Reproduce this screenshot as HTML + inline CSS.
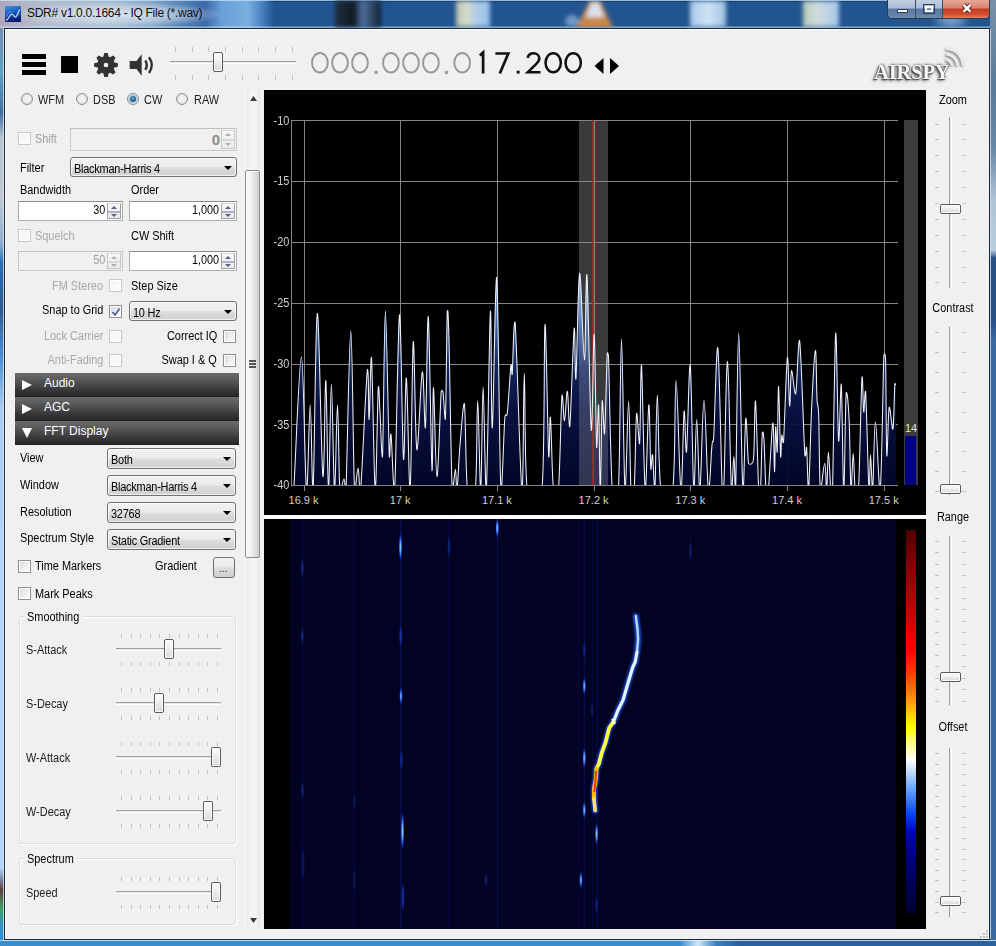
<!DOCTYPE html><html><head><meta charset="utf-8"><style>html,body{margin:0;padding:0;width:996px;height:946px;overflow:hidden;position:relative;font-family:"Liberation Sans", sans-serif;}
.t{position:absolute;white-space:nowrap;line-height:1;font-family:"Liberation Sans", sans-serif;}
div{box-sizing:border-box;}
</style></head><body><div style="position:absolute;left:0;top:0;width:996px;height:946px;background:#2f62a0;"></div><div style="position:absolute;left:0px;top:0px;width:996px;height:29px;background:linear-gradient(90deg,#b0a8bc 0px,#b4bccc 40px,#a8bcd0 110px,#8aa8c8 150px,#5a88b8 178px,#3a68a8 205px,#6aa0d8 222px,#78b0e0 248px,#4a80c0 262px,#22558f 274px,#22558f 996px);"></div><div style="position:absolute;left:10px;top:2px;width:215px;height:25px;background:radial-gradient(ellipse 50% 50% at 50% 50%,rgba(235,240,248,0.75) 0,rgba(220,230,240,0.5) 60%,rgba(220,230,240,0) 100%);"></div><div style="position:absolute;left:0px;top:0px;width:996px;height:1px;background:rgba(200,230,250,0.7);"></div><div style="position:absolute;left:270px;top:1px;width:620px;height:1px;background:rgba(20,40,70,0.5);"></div><div style="position:absolute;left:0px;top:26px;width:996px;height:2px;background:linear-gradient(180deg,rgba(255,255,255,0.15),rgba(200,225,245,0.7));"></div><div style="position:absolute;left:335px;top:1px;width:46px;height:26px;background:linear-gradient(90deg,#203040,#101820 40%,#5070a0 60%,#102030);filter:blur(2px);"></div><div style="position:absolute;left:456px;top:1px;width:34px;height:26px;background:linear-gradient(90deg,#b8c0b0,#d8dcc8 30%,#b0cce8 60%,#98c0e8);filter:blur(2px);"></div><svg style="position:absolute;left:550px;top:0px" width="80" height="28" viewBox="0 0 80 28"><defs><filter id="tb1" x="-30%" y="-30%" width="160%" height="160%"><feGaussianBlur stdDeviation="2.3"/></filter><clipPath id="tbc"><rect x="0" y="1" width="80" height="26"/></clipPath></defs><g clip-path="url(#tbc)"><g filter="url(#tb1)"><path d="M40,0 L50,0 L63,28 L26,28 Z" fill="#c88848"/><path d="M41,3 L49,3 L54,17 L36,17 Z" fill="#dde2ec"/><ellipse cx="22" cy="21" rx="7" ry="6" fill="#7098c8"/></g></g></svg><div style="position:absolute;left:690px;top:1px;width:36px;height:26px;background:linear-gradient(90deg,#a8c8e8,#d0e4f4 50%,#a0c0e0);filter:blur(2px);"></div><div style="position:absolute;left:803px;top:1px;width:36px;height:26px;background:linear-gradient(90deg,#b8c8b8,#d0dce0 40%,#a8c8e8);filter:blur(2px);"></div><div style="position:absolute;left:936px;top:1px;width:30px;height:26px;background:linear-gradient(90deg,#4a7ab0,#7aa0c8 50%,#4a7ab0);filter:blur(3px);"></div><div style="position:absolute;left:0px;top:28px;width:4px;height:918px;background:linear-gradient(180deg,#7890b0 0,#60a0c0 45px,#4070a0 85px,#b8c4d0 110px,#c0c8d0 170px,#90b0d0 215px,#2a70b0 235px,#305a90 280px,#5090d0 330px,#a8ccf0 380px,#b0d4f8 520px,#b0d4f8 840px,#8090a8 850px,#604040 862px,#40a060 880px,#3090d0 900px,#3090d0 918px);"></div><div style="position:absolute;left:3px;top:28px;width:1px;height:912px;background:rgba(230,240,250,0.7);"></div><div style="position:absolute;left:990px;top:0px;width:6px;height:946px;background:linear-gradient(180deg,#7890a8 0,#5a7a9a 90px,#6a88a8 150px,#b0c4d8 200px,#b8cce0 250px,#2a5088 258px,#2a5088 320px,#3a68a0 340px,#3a68a0 946px);"></div><div style="position:absolute;left:990px;top:29px;width:1px;height:910px;background:rgba(210,225,240,0.8);"></div><div style="position:absolute;left:0px;top:940px;width:996px;height:6px;background:linear-gradient(90deg,#3a8ccc 0,#3a8ccc 680px,#d0e8f8 698px,#3a80c0 716px,#2a60a0 740px,#2a60a0 996px);"></div><div style="position:absolute;left:0px;top:940px;width:996px;height:1px;background:rgba(220,240,255,0.8);"></div><svg style="position:absolute;left:5px;top:6px" width="16" height="16" viewBox="0 0 16 16"><defs><linearGradient id="ig" x1="0" y1="0" x2="0.3" y2="1"><stop offset="0" stop-color="#3a98e0"/><stop offset="0.5" stop-color="#1a5ab8"/><stop offset="1" stop-color="#0a1a70"/></linearGradient></defs><rect width="16" height="16" fill="url(#ig)"/><path d="M1,14 C2.5,15 4,10 6,8.5 C8,7 9,11 10.5,11 C12,11 13,5 15,3.5" stroke="#c8e0f8" stroke-width="1.1" fill="none"/><path d="M1.5,11 C3,5 6,4 7.5,8 C9,12 11,13 14.5,7" stroke="#90b8e8" stroke-width="0.8" fill="none" opacity="0.8"/></svg><div class="t" style="left:27px;top:7.2px;font-size:12px;color:#101010;letter-spacing:-0.28px;">SDR# v1.0.0.1664 - IQ File (*.wav)</div><div style="position:absolute;left:887px;top:0px;width:103px;height:19px;border:1px solid #2a3a50;border-top:none;border-radius:0 0 5px 5px;overflow:hidden;background:linear-gradient(180deg,#c0d0e0 0,#a8bcd4 45%,#5878a0 50%,#6a8ab0 100%);">
<div style="position:absolute;left:27px;top:0;width:1px;height:18px;background:#3a4a60"></div>
<div style="position:absolute;left:54px;top:0;width:1px;height:18px;background:#3a4a60"></div>
<div style="position:absolute;left:55px;top:0;width:47px;height:18px;background:linear-gradient(180deg,#e8a898 0,#d88070 45%,#c83820 50%,#d05030 80%,#e08060 100%);"></div>
<div style="position:absolute;left:9px;top:9px;width:11px;height:4px;background:#fff;border:1px solid #304050;"></div>
<div style="position:absolute;left:35px;top:4px;width:12px;height:10px;border:1px solid #303c4c;background:transparent;"><div style="position:absolute;left:1px;top:1px;width:8px;height:6px;border:2px solid #fff;"></div></div>
<svg style="position:absolute;left:73px;top:2px" width="12" height="12" viewBox="0 0 12 12"><path d="M2.6,2.8 L9.4,9.6 M9.4,2.8 L2.6,9.6" stroke="#4a2418" stroke-width="4.4" stroke-linecap="butt"/><path d="M2.6,2.8 L9.4,9.6 M9.4,2.8 L2.6,9.6" stroke="#fff" stroke-width="2.6" stroke-linecap="butt"/></svg>
</div><div style="position:absolute;left:4px;top:28px;width:986px;height:912px;background:#f0f0f0;border:1px solid #1c2838;"></div><div style="position:absolute;left:5px;top:29px;width:984px;height:1px;background:#ffffff;"></div><div style="position:absolute;left:5px;top:29px;width:1px;height:910px;background:#fcfcfc;"></div><div style="position:absolute;left:22px;top:54px;width:24px;height:5px;background:#000;"></div><div style="position:absolute;left:22px;top:62px;width:24px;height:5px;background:#000;"></div><div style="position:absolute;left:22px;top:70px;width:24px;height:5px;background:#000;"></div><div style="position:absolute;left:61px;top:56px;width:17px;height:17px;background:#000;"></div><svg style="position:absolute;left:94px;top:53px" width="24" height="24" viewBox="0 0 24 24"><path d="M20.41,9.41 L23.88,10.29 L23.88,13.71 L20.41,14.59 L19.78,16.11 L21.61,19.19 L19.19,21.61 L16.11,19.78 L14.59,20.41 L13.71,23.88 L10.29,23.88 L9.41,20.41 L7.89,19.78 L4.81,21.61 L2.39,19.19 L4.22,16.11 L3.59,14.59 L0.12,13.71 L0.12,10.29 L3.59,9.41 L4.22,7.89 L2.39,4.81 L4.81,2.39 L7.89,4.22 L9.41,3.59 L10.29,0.12 L13.71,0.12 L14.59,3.59 L16.11,4.22 L19.19,2.39 L21.61,4.81 L19.78,7.89 Z" fill="#333"/><circle cx="12" cy="12" r="2.3" fill="#f0f0f0"/></svg><svg style="position:absolute;left:129px;top:53px" width="26" height="24" viewBox="0 0 26 24"><path d="M0.7 8 L7.5 8 L12.7 1.2 L12.7 22.7 L7.5 16 L0.7 16 Z" fill="#333"/><path d="M16.3 7.5 Q19.3 12 16.3 16.8" stroke="#333" stroke-width="2.4" fill="none"/><path d="M20 4.3 Q25.5 12 20 20" stroke="#333" stroke-width="2.4" fill="none"/></svg><div style="position:absolute;left:170px;top:61px;width:126px;height:3px;border-top:1px solid #a0a0a0;border-bottom:1px solid #ffffff;background:#e6e6e6;"></div><div style="position:absolute;left:175px;top:47px;width:1px;height:5px;background:#c4c4c4;"></div><div style="position:absolute;left:175px;top:75px;width:1px;height:5px;background:#c4c4c4;"></div><div style="position:absolute;left:192px;top:47px;width:1px;height:5px;background:#c4c4c4;"></div><div style="position:absolute;left:192px;top:75px;width:1px;height:5px;background:#c4c4c4;"></div><div style="position:absolute;left:208px;top:47px;width:1px;height:5px;background:#c4c4c4;"></div><div style="position:absolute;left:208px;top:75px;width:1px;height:5px;background:#c4c4c4;"></div><div style="position:absolute;left:225px;top:47px;width:1px;height:5px;background:#c4c4c4;"></div><div style="position:absolute;left:225px;top:75px;width:1px;height:5px;background:#c4c4c4;"></div><div style="position:absolute;left:242px;top:47px;width:1px;height:5px;background:#c4c4c4;"></div><div style="position:absolute;left:242px;top:75px;width:1px;height:5px;background:#c4c4c4;"></div><div style="position:absolute;left:258px;top:47px;width:1px;height:5px;background:#c4c4c4;"></div><div style="position:absolute;left:258px;top:75px;width:1px;height:5px;background:#c4c4c4;"></div><div style="position:absolute;left:275px;top:47px;width:1px;height:5px;background:#c4c4c4;"></div><div style="position:absolute;left:275px;top:75px;width:1px;height:5px;background:#c4c4c4;"></div><div style="position:absolute;left:292px;top:47px;width:1px;height:5px;background:#c4c4c4;"></div><div style="position:absolute;left:292px;top:75px;width:1px;height:5px;background:#c4c4c4;"></div><div style="position:absolute;left:213px;top:52px;width:10px;height:20px;border:1px solid #5a5a5a;border-radius:2px;background:linear-gradient(180deg,#fdfdfd 0,#f0f0f0 40%,#d8d8d8 100%);box-shadow:inset 0 0 0 1px #fff;"></div><svg style="position:absolute;left:300px;top:45px" width="300" height="35" viewBox="300 45 300 35"><ellipse cx="319.9" cy="62.75" rx="7.9" ry="9.75" fill="none" stroke="#989898" stroke-width="1.9"/><ellipse cx="340" cy="62.75" rx="7.9" ry="9.75" fill="none" stroke="#989898" stroke-width="1.9"/><ellipse cx="360" cy="62.75" rx="7.9" ry="9.75" fill="none" stroke="#989898" stroke-width="1.9"/><ellipse cx="390.9" cy="62.75" rx="7.9" ry="9.75" fill="none" stroke="#989898" stroke-width="1.9"/><ellipse cx="411" cy="62.75" rx="7.9" ry="9.75" fill="none" stroke="#989898" stroke-width="1.9"/><ellipse cx="430.9" cy="62.75" rx="7.9" ry="9.75" fill="none" stroke="#989898" stroke-width="1.9"/><ellipse cx="462.2" cy="62.75" rx="7.9" ry="9.75" fill="none" stroke="#989898" stroke-width="1.9"/><rect x="374.5" y="70.8" width="3.2" height="3.2" fill="#a0a0a0"/><rect x="444.9" y="70.8" width="3.2" height="3.2" fill="#a0a0a0"/><ellipse cx="553.2" cy="62.75" rx="7.65" ry="9.45" fill="none" stroke="#111" stroke-width="2.5"/><ellipse cx="573.2" cy="62.75" rx="7.65" ry="9.45" fill="none" stroke="#111" stroke-width="2.5"/><rect x="516.7" y="70.7" width="2.9" height="2.9" fill="#111"/><path d="M479.8,55.6 L483.1,52.6 L483.1,73.5" fill="none" stroke="#111" stroke-width="2.7" stroke-linejoin="miter"/><path d="M495.4,53.5 L508.3,53.5 L499.8,73.5" fill="none" stroke="#111" stroke-width="2.7" stroke-linejoin="miter"/><path d="M527.6,57.8 C528.5,54.5 531,53.3 533.6,53.3 C537,53.3 539.3,55.6 539.3,58.6 C539.3,61.2 537.8,62.6 535.6,64.6 L527.8,72.2 L540.5,72.2" fill="none" stroke="#111" stroke-width="2.6" stroke-linejoin="miter"/></svg><svg style="position:absolute;left:594px;top:57px" width="26" height="18" viewBox="0 0 26 18"><path d="M0.5 9 L9.5 1 L9.5 17 Z" fill="#000"/><path d="M16 1 L25 9 L16 17 Z" fill="#000"/></svg><div class="t" style="left:874px;top:61.5px;font-size:21px;font-weight:bold;font-family:'Liberation Serif',serif;color:#f6f6f6;letter-spacing:-0.2px;transform:scale(0.98,0.98);transform-origin:0 0;text-shadow:-1px 1px 1px #404040,-2px 2px 3px #707070,0 0 3px #808080,1px -1px 2px #a0a0a0;">AIRSPY</div><svg style="position:absolute;left:938px;top:44px" width="32" height="30" viewBox="0 0 32 30"><g fill="none" stroke="#ececec" stroke-width="2.2" style="filter:drop-shadow(-1px 1px 1px #606060)"><path d="M8 16 A5.5 5.5 0 0 1 13.5 21.5"/><path d="M8 10.5 A11 11 0 0 1 19 21.5"/><path d="M8 5 A16.5 16.5 0 0 1 24.5 21.5"/></g></svg><div style="position:absolute;left:21px;top:93px;width:12px;height:12px;border-radius:50%;border:1px solid #8e8e8e;background:radial-gradient(circle at 50% 50%,#f6f6f6 0,#ececec 45%,#d6d6d6 85%,#c8c8c8 100%);padding:0;"><div style="position:absolute;left:0;top:0;width:10px;height:10px;border-radius:50%;"></div></div><div class="t" style="left:38px;top:93.6px;font-size:12px;color:#202020;transform:scaleX(0.91);transform-origin:0 50%;">WFM</div><div style="position:absolute;left:76px;top:93px;width:12px;height:12px;border-radius:50%;border:1px solid #8e8e8e;background:radial-gradient(circle at 50% 50%,#f6f6f6 0,#ececec 45%,#d6d6d6 85%,#c8c8c8 100%);padding:0;"><div style="position:absolute;left:0;top:0;width:10px;height:10px;border-radius:50%;"></div></div><div class="t" style="left:93px;top:93.6px;font-size:12px;color:#202020;transform:scaleX(0.91);transform-origin:0 50%;">DSB</div><div style="position:absolute;left:127px;top:93px;width:12px;height:12px;border-radius:50%;border:1px solid #8e8e8e;background:radial-gradient(circle at 50% 50%,#f6f6f6 0,#ececec 45%,#d6d6d6 85%,#c8c8c8 100%);padding:0;"><div style="position:absolute;left:0;top:0;width:10px;height:10px;border-radius:50%;"><div style="position:absolute;left:2px;top:2px;width:6px;height:6px;border-radius:50%;background:radial-gradient(circle at 45% 40%,#60b0e0 0,#1e6a98 50%,#0a3058 100%);box-shadow:0 0 1px 1px rgba(90,160,210,0.5);"></div></div></div><div class="t" style="left:144px;top:93.6px;font-size:12px;color:#202020;transform:scaleX(0.91);transform-origin:0 50%;">CW</div><div style="position:absolute;left:176px;top:93px;width:12px;height:12px;border-radius:50%;border:1px solid #8e8e8e;background:radial-gradient(circle at 50% 50%,#f6f6f6 0,#ececec 45%,#d6d6d6 85%,#c8c8c8 100%);padding:0;"><div style="position:absolute;left:0;top:0;width:10px;height:10px;border-radius:50%;"></div></div><div class="t" style="left:194px;top:93.6px;font-size:12px;color:#202020;transform:scaleX(0.91);transform-origin:0 50%;">RAW</div><div style="position:absolute;left:18px;top:132px;width:13px;height:13px;border:1px solid #c8c8c8;background:#fff;"><div style="position:absolute;left:1px;top:1px;width:9px;height:9px;background:linear-gradient(135deg,#f4f4f4,#fbfbfb);"></div></div><div class="t" style="left:35px;top:132.6px;font-size:12px;color:#a0a0a0;transform:scaleX(0.91);transform-origin:0 50%;">Shift</div><div style="position:absolute;left:70px;top:128px;width:167px;height:23px;border:1px solid #c8c8c8;border-top-color:#c0c0c0;background:#f0f0f0;"></div><div style="position:absolute;left:221px;top:130px;width:14px;height:19px;border:1px solid #c8c8c8;border-top-color:#d8d8d8;background:linear-gradient(180deg,#f8f8fa,#e8e8ee);"><div style="position:absolute;left:0;top:8px;width:12px;height:2px;background:#d8d8d8;"></div><svg style="position:absolute;left:3px;top:2px" width="6" height="3"><path d="M0 3 L3 0 L6 3Z" fill="#b0b0b0"/></svg><svg style="position:absolute;left:3px;top:12px" width="6" height="3"><path d="M0 0 L3 3 L6 0Z" fill="#b0b0b0"/></svg></div><div class="t" style="right:776px;top:131.8px;font-size:15px;color:#8c8c8c;font-weight:bold;">0</div><div class="t" style="left:20px;top:162.1px;font-size:12px;color:#000;transform:scaleX(0.91);transform-origin:0 50%;">Filter</div><div style="position:absolute;left:70px;top:157px;width:167px;height:20px;border:1px solid #707070;border-radius:3px;background:linear-gradient(180deg,#f2f2f2 0,#ebebeb 48%,#dddddd 52%,#cfcfcf 100%);box-shadow:inset 0 0 0 1px rgba(255,255,255,0.7);"></div><div class="t" style="left:74px;top:162.6px;font-size:12px;color:#000;transform:scaleX(0.91);transform-origin:0 50%;letter-spacing:-0.25px;">Blackman-Harris 4</div><svg style="position:absolute;left:224px;top:165.5px" width="8" height="4"><path d="M0 0 L8 0 L4 4Z" fill="#000"/></svg><div class="t" style="left:20px;top:184.1px;font-size:12px;color:#000;transform:scaleX(0.91);transform-origin:0 50%;">Bandwidth</div><div class="t" style="left:131px;top:184.1px;font-size:12px;color:#000;transform:scaleX(0.91);transform-origin:0 50%;">Order</div><div style="position:absolute;left:18px;top:201px;width:105px;height:20px;border:1px solid #abadb3;border-top-color:#8a8c94;background:#ffffff;"></div><div style="position:absolute;left:107px;top:203px;width:14px;height:16px;border:1px solid #a0a0a8;border-top-color:#d8d8d8;background:linear-gradient(180deg,#f8f8fa,#e8e8ee);"><div style="position:absolute;left:0;top:7px;width:12px;height:2px;background:#b0b4c0;"></div><svg style="position:absolute;left:3px;top:2px" width="6" height="3"><path d="M0 3 L3 0 L6 3Z" fill="#56608a"/></svg><svg style="position:absolute;left:3px;top:10px" width="6" height="3"><path d="M0 0 L3 3 L6 0Z" fill="#56608a"/></svg></div><div class="t" style="right:890.5px;top:204.2px;font-size:12px;color:#000;transform:scaleX(0.9);transform-origin:100% 50%;">30</div><div style="position:absolute;left:129px;top:201px;width:108px;height:20px;border:1px solid #abadb3;border-top-color:#8a8c94;background:#ffffff;"></div><div style="position:absolute;left:221px;top:203px;width:14px;height:16px;border:1px solid #a0a0a8;border-top-color:#d8d8d8;background:linear-gradient(180deg,#f8f8fa,#e8e8ee);"><div style="position:absolute;left:0;top:7px;width:12px;height:2px;background:#b0b4c0;"></div><svg style="position:absolute;left:3px;top:2px" width="6" height="3"><path d="M0 3 L3 0 L6 3Z" fill="#56608a"/></svg><svg style="position:absolute;left:3px;top:10px" width="6" height="3"><path d="M0 0 L3 3 L6 0Z" fill="#56608a"/></svg></div><div class="t" style="right:776.5px;top:204.2px;font-size:12px;color:#000;transform:scaleX(0.9);transform-origin:100% 50%;">1,000</div><div style="position:absolute;left:18px;top:229px;width:13px;height:13px;border:1px solid #c8c8c8;background:#fff;"><div style="position:absolute;left:1px;top:1px;width:9px;height:9px;background:linear-gradient(135deg,#f4f4f4,#fbfbfb);"></div></div><div class="t" style="left:35px;top:230.1px;font-size:12px;color:#a8a8a8;transform:scaleX(0.91);transform-origin:0 50%;">Squelch</div><div class="t" style="left:131px;top:230.1px;font-size:12px;color:#000;transform:scaleX(0.91);transform-origin:0 50%;">CW Shift</div><div style="position:absolute;left:18px;top:251px;width:105px;height:20px;border:1px solid #c8c8c8;border-top-color:#c0c0c0;background:#f0f0f0;"></div><div style="position:absolute;left:107px;top:253px;width:14px;height:16px;border:1px solid #c8c8c8;border-top-color:#d8d8d8;background:linear-gradient(180deg,#f8f8fa,#e8e8ee);"><div style="position:absolute;left:0;top:7px;width:12px;height:2px;background:#d8d8d8;"></div><svg style="position:absolute;left:3px;top:2px" width="6" height="3"><path d="M0 3 L3 0 L6 3Z" fill="#b0b0b0"/></svg><svg style="position:absolute;left:3px;top:10px" width="6" height="3"><path d="M0 0 L3 3 L6 0Z" fill="#b0b0b0"/></svg></div><div class="t" style="right:890.5px;top:254.2px;font-size:12px;color:#a0a0a0;transform:scaleX(0.9);transform-origin:100% 50%;">50</div><div style="position:absolute;left:129px;top:251px;width:108px;height:20px;border:1px solid #abadb3;border-top-color:#8a8c94;background:#ffffff;"></div><div style="position:absolute;left:221px;top:253px;width:14px;height:16px;border:1px solid #a0a0a8;border-top-color:#d8d8d8;background:linear-gradient(180deg,#f8f8fa,#e8e8ee);"><div style="position:absolute;left:0;top:7px;width:12px;height:2px;background:#b0b4c0;"></div><svg style="position:absolute;left:3px;top:2px" width="6" height="3"><path d="M0 3 L3 0 L6 3Z" fill="#56608a"/></svg><svg style="position:absolute;left:3px;top:10px" width="6" height="3"><path d="M0 0 L3 3 L6 0Z" fill="#56608a"/></svg></div><div class="t" style="right:776.5px;top:254.2px;font-size:12px;color:#000;transform:scaleX(0.9);transform-origin:100% 50%;">1,000</div><div class="t" style="right:893px;top:280.1px;font-size:12px;color:#a8a8a8;transform:scaleX(0.91);transform-origin:100% 50%;">FM Stereo</div><div style="position:absolute;left:109px;top:279px;width:13px;height:13px;border:1px solid #c8c8c8;background:#fff;"><div style="position:absolute;left:1px;top:1px;width:9px;height:9px;background:linear-gradient(135deg,#f4f4f4,#fbfbfb);"></div></div><div class="t" style="left:131px;top:280.1px;font-size:12px;color:#000;transform:scaleX(0.91);transform-origin:0 50%;">Step Size</div><div class="t" style="right:893px;top:304.1px;font-size:12px;color:#000;transform:scaleX(0.91);transform-origin:100% 50%;">Snap to Grid</div><div style="position:absolute;left:109px;top:305px;width:13px;height:13px;border:1px solid #8e8f8f;background:#fff;"><div style="position:absolute;left:1px;top:1px;width:9px;height:9px;background:linear-gradient(135deg,#dcdcdc 0,#f0f0f0 60%,#fbfbfb 100%);"></div><svg style="position:absolute;left:1px;top:1px" width="10" height="10" viewBox="0 0 10 10"><path d="M1.5 5 L4 8 L8.5 1.5" stroke="#4a5a9a" stroke-width="1.6" fill="none"/></svg></div><div style="position:absolute;left:129px;top:301px;width:108px;height:20px;border:1px solid #707070;border-radius:3px;background:linear-gradient(180deg,#f2f2f2 0,#ebebeb 48%,#dddddd 52%,#cfcfcf 100%);box-shadow:inset 0 0 0 1px rgba(255,255,255,0.7);"></div><div class="t" style="left:133px;top:306.6px;font-size:12px;color:#000;transform:scaleX(0.91);transform-origin:0 50%;letter-spacing:-0.25px;">10 Hz</div><svg style="position:absolute;left:224px;top:309.5px" width="8" height="4"><path d="M0 0 L8 0 L4 4Z" fill="#000"/></svg><div class="t" style="right:893px;top:330.1px;font-size:12px;color:#a8a8a8;transform:scaleX(0.91);transform-origin:100% 50%;">Lock Carrier</div><div style="position:absolute;left:109px;top:330px;width:13px;height:13px;border:1px solid #c8c8c8;background:#fff;"><div style="position:absolute;left:1px;top:1px;width:9px;height:9px;background:linear-gradient(135deg,#f4f4f4,#fbfbfb);"></div></div><div class="t" style="right:779px;top:330.1px;font-size:12px;color:#000;transform:scaleX(0.91);transform-origin:100% 50%;">Correct IQ</div><div style="position:absolute;left:223px;top:330px;width:13px;height:13px;border:1px solid #8e8f8f;background:#fff;"><div style="position:absolute;left:1px;top:1px;width:9px;height:9px;background:linear-gradient(135deg,#dcdcdc 0,#f0f0f0 60%,#fbfbfb 100%);"></div></div><div class="t" style="right:893px;top:354.1px;font-size:12px;color:#a8a8a8;transform:scaleX(0.91);transform-origin:100% 50%;">Anti-Fading</div><div style="position:absolute;left:109px;top:354px;width:13px;height:13px;border:1px solid #c8c8c8;background:#fff;"><div style="position:absolute;left:1px;top:1px;width:9px;height:9px;background:linear-gradient(135deg,#f4f4f4,#fbfbfb);"></div></div><div class="t" style="right:779px;top:354.1px;font-size:12px;color:#000;transform:scaleX(0.91);transform-origin:100% 50%;">Swap I &amp; Q</div><div style="position:absolute;left:223px;top:354px;width:13px;height:13px;border:1px solid #8e8f8f;background:#fff;"><div style="position:absolute;left:1px;top:1px;width:9px;height:9px;background:linear-gradient(135deg,#dcdcdc 0,#f0f0f0 60%,#fbfbfb 100%);"></div></div><div style="position:absolute;left:15px;top:373px;width:224px;height:24px;background:linear-gradient(180deg,#6c6c6e 0,#58585a 30%,#3c3c3e 65%,#2a2a2c 92%,#1e1e20 100%);"></div><svg style="position:absolute;left:22px;top:380px" width="10" height="10"><path d="M0 0 L10 5 L0 10Z" fill="#fff"/></svg><div class="t" style="left:44px;top:376.8px;font-size:12px;color:#fff;">Audio</div><div style="position:absolute;left:15px;top:397px;width:224px;height:24px;background:linear-gradient(180deg,#6c6c6e 0,#58585a 30%,#3c3c3e 65%,#2a2a2c 92%,#1e1e20 100%);"></div><svg style="position:absolute;left:22px;top:404px" width="10" height="10"><path d="M0 0 L10 5 L0 10Z" fill="#fff"/></svg><div class="t" style="left:44px;top:400.8px;font-size:12px;color:#fff;">AGC</div><div style="position:absolute;left:15px;top:421px;width:224px;height:24px;background:linear-gradient(180deg,#6c6c6e 0,#58585a 30%,#3c3c3e 65%,#2a2a2c 92%,#1e1e20 100%);"></div><svg style="position:absolute;left:22px;top:428px" width="10" height="10"><path d="M0 0 L10 0 L5 10Z" fill="#fff"/></svg><div class="t" style="left:44px;top:424.8px;font-size:12px;color:#fff;">FFT Display</div><div class="t" style="left:20px;top:451.6px;font-size:12px;color:#000;transform:scaleX(0.91);transform-origin:0 50%;">View</div><div style="position:absolute;left:107px;top:448px;width:129px;height:21px;border:1px solid #707070;border-radius:3px;background:linear-gradient(180deg,#f2f2f2 0,#ebebeb 48%,#dddddd 52%,#cfcfcf 100%);box-shadow:inset 0 0 0 1px rgba(255,255,255,0.7);"></div><div class="t" style="left:111px;top:454.1px;font-size:12px;color:#000;transform:scaleX(0.91);transform-origin:0 50%;letter-spacing:-0.25px;">Both</div><svg style="position:absolute;left:223px;top:457.0px" width="8" height="4"><path d="M0 0 L8 0 L4 4Z" fill="#000"/></svg><div class="t" style="left:20px;top:478.6px;font-size:12px;color:#000;transform:scaleX(0.91);transform-origin:0 50%;">Window</div><div style="position:absolute;left:107px;top:475px;width:129px;height:21px;border:1px solid #707070;border-radius:3px;background:linear-gradient(180deg,#f2f2f2 0,#ebebeb 48%,#dddddd 52%,#cfcfcf 100%);box-shadow:inset 0 0 0 1px rgba(255,255,255,0.7);"></div><div class="t" style="left:111px;top:481.1px;font-size:12px;color:#000;transform:scaleX(0.91);transform-origin:0 50%;letter-spacing:-0.25px;">Blackman-Harris 4</div><svg style="position:absolute;left:223px;top:484.0px" width="8" height="4"><path d="M0 0 L8 0 L4 4Z" fill="#000"/></svg><div class="t" style="left:20px;top:505.6px;font-size:12px;color:#000;transform:scaleX(0.91);transform-origin:0 50%;">Resolution</div><div style="position:absolute;left:107px;top:502px;width:129px;height:21px;border:1px solid #707070;border-radius:3px;background:linear-gradient(180deg,#f2f2f2 0,#ebebeb 48%,#dddddd 52%,#cfcfcf 100%);box-shadow:inset 0 0 0 1px rgba(255,255,255,0.7);"></div><div class="t" style="left:111px;top:508.1px;font-size:12px;color:#000;transform:scaleX(0.91);transform-origin:0 50%;letter-spacing:-0.25px;">32768</div><svg style="position:absolute;left:223px;top:511.0px" width="8" height="4"><path d="M0 0 L8 0 L4 4Z" fill="#000"/></svg><div class="t" style="left:20px;top:532.1px;font-size:12px;color:#000;transform:scaleX(0.91);transform-origin:0 50%;">Spectrum Style</div><div style="position:absolute;left:107px;top:529px;width:129px;height:21px;border:1px solid #707070;border-radius:3px;background:linear-gradient(180deg,#f2f2f2 0,#ebebeb 48%,#dddddd 52%,#cfcfcf 100%);box-shadow:inset 0 0 0 1px rgba(255,255,255,0.7);"></div><div class="t" style="left:111px;top:535.1px;font-size:12px;color:#000;transform:scaleX(0.91);transform-origin:0 50%;letter-spacing:-0.25px;">Static Gradient</div><svg style="position:absolute;left:223px;top:538.0px" width="8" height="4"><path d="M0 0 L8 0 L4 4Z" fill="#000"/></svg><div style="position:absolute;left:18px;top:560px;width:13px;height:13px;border:1px solid #8e8f8f;background:#fff;"><div style="position:absolute;left:1px;top:1px;width:9px;height:9px;background:linear-gradient(135deg,#dcdcdc 0,#f0f0f0 60%,#fbfbfb 100%);"></div></div><div class="t" style="left:35px;top:560.1px;font-size:12px;color:#000;transform:scaleX(0.91);transform-origin:0 50%;">Time Markers</div><div class="t" style="left:155px;top:560.1px;font-size:12px;color:#000;transform:scaleX(0.91);transform-origin:0 50%;">Gradient</div><div style="position:absolute;left:213px;top:557px;width:22px;height:21px;border:1px solid #707070;border-radius:3px;background:linear-gradient(180deg,#f2f2f2 0,#ebebeb 48%,#dddddd 52%,#cfcfcf 100%);"></div><div class="t" style="left:219px;top:563.5px;font-size:10px;color:#202020;">...</div><div style="position:absolute;left:18px;top:587px;width:13px;height:13px;border:1px solid #8e8f8f;background:#fff;"><div style="position:absolute;left:1px;top:1px;width:9px;height:9px;background:linear-gradient(135deg,#dcdcdc 0,#f0f0f0 60%,#fbfbfb 100%);"></div></div><div class="t" style="left:35px;top:587.6px;font-size:12px;color:#000;transform:scaleX(0.91);transform-origin:0 50%;">Mark Peaks</div><div style="position:absolute;left:19px;top:616px;width:217px;height:228px;border:1px solid #d5dfe5;border-radius:3px;box-shadow:inset 1px 1px 0 #fff,1px 1px 0 #fff;"></div><div style="position:absolute;left:25px;top:614px;width:58px;height:4px;background:#f0f0f0;"></div><div class="t" style="left:27px;top:610.6px;font-size:12px;color:#000;transform:scaleX(0.91);transform-origin:0 50%;">Smoothing</div><div class="t" style="left:26px;top:643.6px;font-size:12px;color:#202020;transform:scaleX(0.91);transform-origin:0 50%;">S-Attack</div><div style="position:absolute;left:116px;top:648px;width:105px;height:3px;border-top:1px solid #a0a0a0;border-bottom:1px solid #ffffff;background:#e6e6e6;"></div><div style="position:absolute;left:121px;top:634px;width:1px;height:4px;background:#c4c4c4;"></div><div style="position:absolute;left:121px;top:662px;width:1px;height:4px;background:#c4c4c4;"></div><div style="position:absolute;left:131px;top:634px;width:1px;height:4px;background:#c4c4c4;"></div><div style="position:absolute;left:131px;top:662px;width:1px;height:4px;background:#c4c4c4;"></div><div style="position:absolute;left:140px;top:634px;width:1px;height:4px;background:#c4c4c4;"></div><div style="position:absolute;left:140px;top:662px;width:1px;height:4px;background:#c4c4c4;"></div><div style="position:absolute;left:150px;top:634px;width:1px;height:4px;background:#c4c4c4;"></div><div style="position:absolute;left:150px;top:662px;width:1px;height:4px;background:#c4c4c4;"></div><div style="position:absolute;left:159px;top:634px;width:1px;height:4px;background:#c4c4c4;"></div><div style="position:absolute;left:159px;top:662px;width:1px;height:4px;background:#c4c4c4;"></div><div style="position:absolute;left:169px;top:634px;width:1px;height:4px;background:#c4c4c4;"></div><div style="position:absolute;left:169px;top:662px;width:1px;height:4px;background:#c4c4c4;"></div><div style="position:absolute;left:179px;top:634px;width:1px;height:4px;background:#c4c4c4;"></div><div style="position:absolute;left:179px;top:662px;width:1px;height:4px;background:#c4c4c4;"></div><div style="position:absolute;left:188px;top:634px;width:1px;height:4px;background:#c4c4c4;"></div><div style="position:absolute;left:188px;top:662px;width:1px;height:4px;background:#c4c4c4;"></div><div style="position:absolute;left:198px;top:634px;width:1px;height:4px;background:#c4c4c4;"></div><div style="position:absolute;left:198px;top:662px;width:1px;height:4px;background:#c4c4c4;"></div><div style="position:absolute;left:207px;top:634px;width:1px;height:4px;background:#c4c4c4;"></div><div style="position:absolute;left:207px;top:662px;width:1px;height:4px;background:#c4c4c4;"></div><div style="position:absolute;left:217px;top:634px;width:1px;height:4px;background:#c4c4c4;"></div><div style="position:absolute;left:217px;top:662px;width:1px;height:4px;background:#c4c4c4;"></div><div style="position:absolute;left:164px;top:639px;width:10px;height:20px;border:1px solid #5a5a5a;border-radius:2px;background:linear-gradient(180deg,#fdfdfd 0,#f0f0f0 40%,#d8d8d8 100%);box-shadow:inset 0 0 0 1px #fff;"></div><div class="t" style="left:26px;top:697.6px;font-size:12px;color:#202020;transform:scaleX(0.91);transform-origin:0 50%;">S-Decay</div><div style="position:absolute;left:116px;top:702px;width:105px;height:3px;border-top:1px solid #a0a0a0;border-bottom:1px solid #ffffff;background:#e6e6e6;"></div><div style="position:absolute;left:121px;top:688px;width:1px;height:4px;background:#c4c4c4;"></div><div style="position:absolute;left:121px;top:716px;width:1px;height:4px;background:#c4c4c4;"></div><div style="position:absolute;left:131px;top:688px;width:1px;height:4px;background:#c4c4c4;"></div><div style="position:absolute;left:131px;top:716px;width:1px;height:4px;background:#c4c4c4;"></div><div style="position:absolute;left:140px;top:688px;width:1px;height:4px;background:#c4c4c4;"></div><div style="position:absolute;left:140px;top:716px;width:1px;height:4px;background:#c4c4c4;"></div><div style="position:absolute;left:150px;top:688px;width:1px;height:4px;background:#c4c4c4;"></div><div style="position:absolute;left:150px;top:716px;width:1px;height:4px;background:#c4c4c4;"></div><div style="position:absolute;left:159px;top:688px;width:1px;height:4px;background:#c4c4c4;"></div><div style="position:absolute;left:159px;top:716px;width:1px;height:4px;background:#c4c4c4;"></div><div style="position:absolute;left:169px;top:688px;width:1px;height:4px;background:#c4c4c4;"></div><div style="position:absolute;left:169px;top:716px;width:1px;height:4px;background:#c4c4c4;"></div><div style="position:absolute;left:179px;top:688px;width:1px;height:4px;background:#c4c4c4;"></div><div style="position:absolute;left:179px;top:716px;width:1px;height:4px;background:#c4c4c4;"></div><div style="position:absolute;left:188px;top:688px;width:1px;height:4px;background:#c4c4c4;"></div><div style="position:absolute;left:188px;top:716px;width:1px;height:4px;background:#c4c4c4;"></div><div style="position:absolute;left:198px;top:688px;width:1px;height:4px;background:#c4c4c4;"></div><div style="position:absolute;left:198px;top:716px;width:1px;height:4px;background:#c4c4c4;"></div><div style="position:absolute;left:207px;top:688px;width:1px;height:4px;background:#c4c4c4;"></div><div style="position:absolute;left:207px;top:716px;width:1px;height:4px;background:#c4c4c4;"></div><div style="position:absolute;left:217px;top:688px;width:1px;height:4px;background:#c4c4c4;"></div><div style="position:absolute;left:217px;top:716px;width:1px;height:4px;background:#c4c4c4;"></div><div style="position:absolute;left:154px;top:693px;width:10px;height:20px;border:1px solid #5a5a5a;border-radius:2px;background:linear-gradient(180deg,#fdfdfd 0,#f0f0f0 40%,#d8d8d8 100%);box-shadow:inset 0 0 0 1px #fff;"></div><div class="t" style="left:26px;top:751.6px;font-size:12px;color:#202020;transform:scaleX(0.91);transform-origin:0 50%;">W-Attack</div><div style="position:absolute;left:116px;top:756px;width:105px;height:3px;border-top:1px solid #a0a0a0;border-bottom:1px solid #ffffff;background:#e6e6e6;"></div><div style="position:absolute;left:121px;top:742px;width:1px;height:4px;background:#c4c4c4;"></div><div style="position:absolute;left:121px;top:770px;width:1px;height:4px;background:#c4c4c4;"></div><div style="position:absolute;left:131px;top:742px;width:1px;height:4px;background:#c4c4c4;"></div><div style="position:absolute;left:131px;top:770px;width:1px;height:4px;background:#c4c4c4;"></div><div style="position:absolute;left:140px;top:742px;width:1px;height:4px;background:#c4c4c4;"></div><div style="position:absolute;left:140px;top:770px;width:1px;height:4px;background:#c4c4c4;"></div><div style="position:absolute;left:150px;top:742px;width:1px;height:4px;background:#c4c4c4;"></div><div style="position:absolute;left:150px;top:770px;width:1px;height:4px;background:#c4c4c4;"></div><div style="position:absolute;left:159px;top:742px;width:1px;height:4px;background:#c4c4c4;"></div><div style="position:absolute;left:159px;top:770px;width:1px;height:4px;background:#c4c4c4;"></div><div style="position:absolute;left:169px;top:742px;width:1px;height:4px;background:#c4c4c4;"></div><div style="position:absolute;left:169px;top:770px;width:1px;height:4px;background:#c4c4c4;"></div><div style="position:absolute;left:179px;top:742px;width:1px;height:4px;background:#c4c4c4;"></div><div style="position:absolute;left:179px;top:770px;width:1px;height:4px;background:#c4c4c4;"></div><div style="position:absolute;left:188px;top:742px;width:1px;height:4px;background:#c4c4c4;"></div><div style="position:absolute;left:188px;top:770px;width:1px;height:4px;background:#c4c4c4;"></div><div style="position:absolute;left:198px;top:742px;width:1px;height:4px;background:#c4c4c4;"></div><div style="position:absolute;left:198px;top:770px;width:1px;height:4px;background:#c4c4c4;"></div><div style="position:absolute;left:207px;top:742px;width:1px;height:4px;background:#c4c4c4;"></div><div style="position:absolute;left:207px;top:770px;width:1px;height:4px;background:#c4c4c4;"></div><div style="position:absolute;left:217px;top:742px;width:1px;height:4px;background:#c4c4c4;"></div><div style="position:absolute;left:217px;top:770px;width:1px;height:4px;background:#c4c4c4;"></div><div style="position:absolute;left:211px;top:747px;width:10px;height:20px;border:1px solid #5a5a5a;border-radius:2px;background:linear-gradient(180deg,#fdfdfd 0,#f0f0f0 40%,#d8d8d8 100%);box-shadow:inset 0 0 0 1px #fff;"></div><div class="t" style="left:26px;top:805.6px;font-size:12px;color:#202020;transform:scaleX(0.91);transform-origin:0 50%;">W-Decay</div><div style="position:absolute;left:116px;top:810px;width:105px;height:3px;border-top:1px solid #a0a0a0;border-bottom:1px solid #ffffff;background:#e6e6e6;"></div><div style="position:absolute;left:121px;top:796px;width:1px;height:4px;background:#c4c4c4;"></div><div style="position:absolute;left:121px;top:824px;width:1px;height:4px;background:#c4c4c4;"></div><div style="position:absolute;left:131px;top:796px;width:1px;height:4px;background:#c4c4c4;"></div><div style="position:absolute;left:131px;top:824px;width:1px;height:4px;background:#c4c4c4;"></div><div style="position:absolute;left:140px;top:796px;width:1px;height:4px;background:#c4c4c4;"></div><div style="position:absolute;left:140px;top:824px;width:1px;height:4px;background:#c4c4c4;"></div><div style="position:absolute;left:150px;top:796px;width:1px;height:4px;background:#c4c4c4;"></div><div style="position:absolute;left:150px;top:824px;width:1px;height:4px;background:#c4c4c4;"></div><div style="position:absolute;left:159px;top:796px;width:1px;height:4px;background:#c4c4c4;"></div><div style="position:absolute;left:159px;top:824px;width:1px;height:4px;background:#c4c4c4;"></div><div style="position:absolute;left:169px;top:796px;width:1px;height:4px;background:#c4c4c4;"></div><div style="position:absolute;left:169px;top:824px;width:1px;height:4px;background:#c4c4c4;"></div><div style="position:absolute;left:179px;top:796px;width:1px;height:4px;background:#c4c4c4;"></div><div style="position:absolute;left:179px;top:824px;width:1px;height:4px;background:#c4c4c4;"></div><div style="position:absolute;left:188px;top:796px;width:1px;height:4px;background:#c4c4c4;"></div><div style="position:absolute;left:188px;top:824px;width:1px;height:4px;background:#c4c4c4;"></div><div style="position:absolute;left:198px;top:796px;width:1px;height:4px;background:#c4c4c4;"></div><div style="position:absolute;left:198px;top:824px;width:1px;height:4px;background:#c4c4c4;"></div><div style="position:absolute;left:207px;top:796px;width:1px;height:4px;background:#c4c4c4;"></div><div style="position:absolute;left:207px;top:824px;width:1px;height:4px;background:#c4c4c4;"></div><div style="position:absolute;left:217px;top:796px;width:1px;height:4px;background:#c4c4c4;"></div><div style="position:absolute;left:217px;top:824px;width:1px;height:4px;background:#c4c4c4;"></div><div style="position:absolute;left:203px;top:801px;width:10px;height:20px;border:1px solid #5a5a5a;border-radius:2px;background:linear-gradient(180deg,#fdfdfd 0,#f0f0f0 40%,#d8d8d8 100%);box-shadow:inset 0 0 0 1px #fff;"></div><div style="position:absolute;left:19px;top:858px;width:217px;height:67px;border:1px solid #d5dfe5;border-radius:3px;box-shadow:inset 1px 1px 0 #fff,1px 1px 0 #fff;"></div><div style="position:absolute;left:25px;top:856px;width:52px;height:4px;background:#f0f0f0;"></div><div class="t" style="left:27px;top:852.6px;font-size:12px;color:#000;transform:scaleX(0.91);transform-origin:0 50%;">Spectrum</div><div class="t" style="left:26px;top:886.6px;font-size:12px;color:#202020;transform:scaleX(0.91);transform-origin:0 50%;">Speed</div><div style="position:absolute;left:116px;top:891px;width:105px;height:3px;border-top:1px solid #a0a0a0;border-bottom:1px solid #ffffff;background:#e6e6e6;"></div><div style="position:absolute;left:121px;top:877px;width:1px;height:4px;background:#c4c4c4;"></div><div style="position:absolute;left:121px;top:905px;width:1px;height:4px;background:#c4c4c4;"></div><div style="position:absolute;left:131px;top:877px;width:1px;height:4px;background:#c4c4c4;"></div><div style="position:absolute;left:131px;top:905px;width:1px;height:4px;background:#c4c4c4;"></div><div style="position:absolute;left:140px;top:877px;width:1px;height:4px;background:#c4c4c4;"></div><div style="position:absolute;left:140px;top:905px;width:1px;height:4px;background:#c4c4c4;"></div><div style="position:absolute;left:150px;top:877px;width:1px;height:4px;background:#c4c4c4;"></div><div style="position:absolute;left:150px;top:905px;width:1px;height:4px;background:#c4c4c4;"></div><div style="position:absolute;left:159px;top:877px;width:1px;height:4px;background:#c4c4c4;"></div><div style="position:absolute;left:159px;top:905px;width:1px;height:4px;background:#c4c4c4;"></div><div style="position:absolute;left:169px;top:877px;width:1px;height:4px;background:#c4c4c4;"></div><div style="position:absolute;left:169px;top:905px;width:1px;height:4px;background:#c4c4c4;"></div><div style="position:absolute;left:179px;top:877px;width:1px;height:4px;background:#c4c4c4;"></div><div style="position:absolute;left:179px;top:905px;width:1px;height:4px;background:#c4c4c4;"></div><div style="position:absolute;left:188px;top:877px;width:1px;height:4px;background:#c4c4c4;"></div><div style="position:absolute;left:188px;top:905px;width:1px;height:4px;background:#c4c4c4;"></div><div style="position:absolute;left:198px;top:877px;width:1px;height:4px;background:#c4c4c4;"></div><div style="position:absolute;left:198px;top:905px;width:1px;height:4px;background:#c4c4c4;"></div><div style="position:absolute;left:207px;top:877px;width:1px;height:4px;background:#c4c4c4;"></div><div style="position:absolute;left:207px;top:905px;width:1px;height:4px;background:#c4c4c4;"></div><div style="position:absolute;left:217px;top:877px;width:1px;height:4px;background:#c4c4c4;"></div><div style="position:absolute;left:217px;top:905px;width:1px;height:4px;background:#c4c4c4;"></div><div style="position:absolute;left:211px;top:882px;width:10px;height:20px;border:1px solid #5a5a5a;border-radius:2px;background:linear-gradient(180deg,#fdfdfd 0,#f0f0f0 40%,#d8d8d8 100%);box-shadow:inset 0 0 0 1px #fff;"></div><div style="position:absolute;left:245px;top:90px;width:15px;height:838px;background:linear-gradient(90deg,#e8e8e8 0,#f4f4f4 30%,#f4f4f4 70%,#e8e8e8 100%);border-left:1px solid #fafafa;"></div><svg style="position:absolute;left:250px;top:96px" width="7" height="5"><path d="M0 5 L3.5 0 L7 5Z" fill="#3c3c3c"/></svg><svg style="position:absolute;left:250px;top:918px" width="7" height="5"><path d="M0 0 L3.5 5 L7 0Z" fill="#3c3c3c"/></svg><div style="position:absolute;left:245px;top:170px;width:15px;height:388px;border:1px solid #8c8c8c;border-radius:2px;background:linear-gradient(90deg,#f8f8f8 0,#f2f2f4 40%,#d8d8dc 80%,#cfcfd2 100%);box-shadow:inset 1px 1px 0 #fff;"></div><div style="position:absolute;left:249px;top:360px;width:7px;height:2px;background:#3a3a3a;opacity:0.85;"></div><div style="position:absolute;left:249px;top:363px;width:7px;height:2px;background:#3a3a3a;opacity:0.85;"></div><div style="position:absolute;left:249px;top:366px;width:7px;height:2px;background:#3a3a3a;opacity:0.85;"></div><svg style="position:absolute;left:0;top:0" width="996" height="946" viewBox="0 0 996 946"><defs><linearGradient id="sf" x1="0" y1="270" x2="0" y2="485" gradientUnits="userSpaceOnUse"><stop offset="0" stop-color="#a8c8f0"/><stop offset="0.25" stop-color="#3a68b0"/><stop offset="0.45" stop-color="#12265e"/><stop offset="0.65" stop-color="#0a1244"/><stop offset="1" stop-color="#02062a"/></linearGradient><linearGradient id="wfc" x1="0" y1="530" x2="0" y2="913" gradientUnits="userSpaceOnUse"><stop offset="0" stop-color="#500000"/><stop offset="0.14" stop-color="#a00000"/><stop offset="0.31" stop-color="#ff0000"/><stop offset="0.38" stop-color="#ff4000"/><stop offset="0.44" stop-color="#ff9000"/><stop offset="0.515" stop-color="#ffff00"/><stop offset="0.6" stop-color="#ffffff"/><stop offset="0.68" stop-color="#60a0ff"/><stop offset="0.745" stop-color="#0040ff"/><stop offset="0.79" stop-color="#0000c0"/><stop offset="0.855" stop-color="#000080"/><stop offset="1" stop-color="#000030"/></linearGradient></defs><rect x="264" y="90" width="662" height="425" fill="#000"/><rect x="264" y="519" width="662" height="410" fill="#000"/><rect x="264" y="515" width="662" height="4" fill="#fbfbfb"/><rect x="579" y="120" width="29" height="365" fill="#3a3a3a"/><rect x="904" y="120" width="14" height="365" fill="#3c3c3c"/><rect x="905" y="436" width="11" height="49" fill="#000080"/><line x1="291" y1="120.5" x2="898" y2="120.5" stroke="#858585" stroke-width="1"/><line x1="291" y1="181.5" x2="898" y2="181.5" stroke="#858585" stroke-width="1"/><line x1="291" y1="242.5" x2="898" y2="242.5" stroke="#858585" stroke-width="1"/><line x1="291" y1="303.5" x2="898" y2="303.5" stroke="#858585" stroke-width="1"/><line x1="291" y1="364.5" x2="898" y2="364.5" stroke="#858585" stroke-width="1"/><line x1="291" y1="424.5" x2="898" y2="424.5" stroke="#858585" stroke-width="1"/><line x1="291" y1="485.5" x2="898" y2="485.5" stroke="#858585" stroke-width="1"/><line x1="291.5" y1="120" x2="291.5" y2="486" stroke="#858585" stroke-width="1"/><line x1="304.5" y1="120" x2="304.5" y2="491" stroke="#858585" stroke-width="1"/><line x1="400.5" y1="120" x2="400.5" y2="491" stroke="#858585" stroke-width="1"/><line x1="497.5" y1="120" x2="497.5" y2="491" stroke="#858585" stroke-width="1"/><line x1="594.5" y1="120" x2="594.5" y2="491" stroke="#858585" stroke-width="1"/><line x1="690.5" y1="120" x2="690.5" y2="491" stroke="#858585" stroke-width="1"/><line x1="787.5" y1="120" x2="787.5" y2="491" stroke="#858585" stroke-width="1"/><line x1="884.5" y1="120" x2="884.5" y2="491" stroke="#858585" stroke-width="1"/><clipPath id="pclip"><rect x="291" y="100" width="606" height="385"/></clipPath><g clip-path="url(#pclip)"><path d="M291.5,490 L291.5,490  C291.9,490.0 291.9,491.5 293.7,490.0 C295.5,465.6 299.1,356.9 301.4,356.9 C303.7,356.9 304.9,481.2 306.5,490.0 C308.1,491.5 309.0,404.8 310.2,404.8 C311.4,404.8 311.8,491.5 313.1,490.0 C314.4,473.3 315.5,316.0 317.3,313.5 C319.1,312.0 321.3,464.3 322.9,476.6 C324.5,478.1 324.8,379.0 325.8,380.5 C326.8,383.0 327.5,489.3 328.5,490.0 C329.5,490.7 330.3,384.1 331.4,384.1 C332.5,384.1 333.4,486.2 334.5,490.0 C335.6,491.5 336.5,404.8 337.5,404.8 C338.5,404.8 338.7,476.4 339.9,490.0 C341.1,491.5 342.9,479.0 344.0,479.0 C345.1,479.0 344.8,491.5 346.0,490.0 C347.2,462.8 349.2,330.6 350.8,330.6 C352.4,330.6 353.2,464.8 354.5,490.0 C355.8,491.5 357.0,468.0 358.1,468.0 C359.2,468.0 358.9,491.5 360.6,490.0 C362.3,471.9 365.8,382.4 367.4,369.5 C369.0,368.0 368.3,420.9 369.1,419.4 C369.9,417.2 370.4,355.8 371.5,357.3 C372.6,370.2 374.0,484.6 375.2,490.0 C376.4,491.5 377.4,400.7 378.3,386.6 C379.2,385.1 379.2,400.1 380.0,413.0 C380.8,425.9 381.5,458.5 382.5,457.0 C383.5,438.3 384.2,311.0 385.4,311.0 C386.6,311.0 388.3,434.4 389.3,457.0 C390.3,458.5 390.0,432.5 391.0,434.0 C392.0,440.1 393.0,491.5 394.6,490.0 C396.2,468.1 397.9,320.4 399.5,314.8 C401.1,313.3 402.2,448.0 403.5,459.6 C404.8,461.1 405.2,376.5 406.4,378.0 C407.6,383.6 408.8,491.5 410.1,490.0 C411.4,483.3 412.1,348.9 413.3,341.5 C414.5,340.0 415.2,444.2 416.9,449.8 C418.5,451.3 420.7,376.0 422.3,372.0 C423.9,370.5 424.3,429.5 425.4,428.0 C426.5,417.8 427.1,315.0 428.3,316.5 C429.5,324.3 431.0,457.4 432.0,470.5 C433.0,472.0 432.6,386.7 433.5,387.8 C434.4,388.9 435.5,475.9 436.9,476.6 C438.3,477.3 440.1,406.9 441.2,391.4 C442.3,389.9 442.2,389.9 443.0,392.0 C443.8,397.1 444.6,420.9 445.4,419.4 C446.2,404.5 446.6,325.6 447.3,311.0 C448.0,309.5 448.1,309.5 449.0,340.0 C449.9,372.8 451.0,466.3 452.2,490.0 C453.4,491.5 454.5,469.3 455.4,469.3 C456.3,469.3 456.1,491.5 457.0,490.0 C457.9,485.1 458.8,458.3 460.2,442.5 C461.6,426.7 463.1,402.1 464.4,403.6 C465.7,412.3 465.5,474.2 467.5,490.0 C469.5,491.5 473.4,491.5 475.3,490.0 C477.2,473.6 476.7,400.7 477.7,400.7 C478.7,400.7 479.7,491.5 480.7,490.0 C481.7,487.5 482.1,387.0 483.1,387.0 C484.1,387.0 485.0,491.5 486.3,490.0 C487.6,476.1 489.3,322.4 490.4,311.0 C491.5,309.5 491.1,429.5 492.3,428.0 C493.5,421.9 495.1,276.0 496.7,277.5 C498.3,288.9 499.4,464.4 500.9,490.0 C502.4,491.5 503.7,431.1 504.9,417.0 C506.1,411.8 506.2,418.5 507.3,413.3 C508.4,403.7 510.1,371.7 511.0,364.6 C511.9,363.1 511.4,375.9 512.2,374.4 C513.0,366.6 513.3,320.5 515.1,322.0 C516.9,343.2 520.2,480.6 521.9,490.0 C523.6,491.5 523.3,373.2 524.3,373.2 C525.3,373.2 524.3,468.6 527.3,490.0 C530.5,491.5 538.7,491.5 541.9,490.0 C545.0,459.7 543.8,330.6 545.0,324.5 C546.2,323.0 547.7,440.0 548.7,457.0 C549.7,458.5 549.5,415.5 550.4,417.0 C551.3,423.1 552.0,476.6 553.5,490.0 C555.0,491.5 556.8,491.5 558.4,490.0 C560.0,472.6 560.9,407.7 562.0,395.0 C563.1,393.5 563.5,421.3 564.5,420.6 C565.5,419.9 566.4,390.3 567.4,391.4 C568.4,392.5 568.6,428.2 569.8,426.7 C571.0,415.1 573.1,336.7 574.2,328.0 C575.3,326.5 574.9,380.7 575.9,379.2 C576.9,369.2 578.0,277.0 579.6,273.4 C581.2,271.9 583.1,359.6 584.4,359.8 C585.7,360.0 585.6,273.1 586.9,274.6 C588.2,287.5 590.0,419.5 591.3,430.4 C592.6,431.9 593.2,332.7 594.2,334.2 C595.2,337.3 595.8,434.5 596.6,447.4 C597.4,448.9 597.9,403.3 598.6,404.8 C599.3,412.6 599.6,490.8 600.3,490.0 C601.0,489.2 601.4,411.0 602.2,400.7 C603.0,399.2 603.7,435.5 604.6,434.0 C605.5,425.4 606.5,368.0 607.2,353.7 C607.9,352.2 607.6,352.2 608.5,356.0 C609.4,381.0 610.5,465.4 612.3,490.0 C614.1,491.5 616.7,491.5 618.4,490.0 C620.1,462.3 620.3,339.0 621.5,339.0 C622.7,339.0 623.7,478.6 625.0,490.0 C626.3,491.5 627.5,401.0 628.6,401.0 C629.7,401.0 630.0,473.7 631.0,490.0 C632.0,491.5 633.2,491.5 634.2,490.0 C635.2,475.9 635.6,421.8 636.6,413.3 C637.6,411.8 638.7,445.2 639.6,443.7 C640.5,434.8 640.5,363.5 641.5,365.0 C642.5,373.5 643.9,482.7 645.2,490.0 C646.5,491.5 647.8,408.6 648.8,404.8 C649.8,403.3 650.1,460.2 650.8,469.3 C651.5,470.8 651.7,453.2 652.5,454.7 C653.3,458.5 654.0,491.5 654.9,490.0 C655.8,479.1 656.2,395.0 657.3,395.0 C658.4,395.0 658.2,472.6 661.0,490.0 C663.8,491.5 669.9,491.5 672.7,490.0 C675.5,469.9 674.6,380.5 676.1,380.5 C677.6,380.5 679.4,484.4 680.9,490.0 C682.4,491.5 683.1,417.9 684.1,411.0 C685.1,409.5 685.4,453.8 686.5,452.3 C687.6,443.8 688.9,363.1 690.2,364.6 C691.5,371.5 692.6,480.0 693.8,490.0 C695.0,491.5 695.6,419.4 696.7,419.4 C697.8,419.4 698.6,491.5 699.9,490.0 C701.2,486.4 702.4,400.0 704.0,400.0 C705.6,400.0 706.9,481.8 708.4,490.0 C709.9,491.5 711.0,454.6 712.0,445.0 C713.0,436.2 712.6,446.5 713.7,437.7 C714.8,419.8 716.2,346.1 717.8,347.6 C719.4,357.2 721.1,465.4 722.2,490.0 C723.3,491.5 723.0,491.5 724.0,482.0 C725.0,458.5 726.1,360.2 727.5,361.7 C728.9,363.2 730.2,472.6 731.4,490.0 C732.6,491.5 733.1,456.6 733.9,456.6 C734.7,456.6 734.7,491.5 735.6,490.0 C736.5,467.3 737.4,333.0 738.7,333.0 C740.0,333.0 741.6,474.4 742.9,490.0 C744.2,491.5 744.8,423.1 745.8,418.2 C746.8,416.7 747.4,454.9 748.5,463.2 C749.6,464.7 750.9,464.7 751.9,463.2 C752.9,461.6 753.1,464.7 753.8,454.7 C754.5,443.3 754.6,399.5 755.5,401.0 C756.4,407.5 757.8,473.7 758.7,490.0 C759.6,491.5 759.8,491.5 760.5,490.0 C761.2,479.5 761.7,442.0 762.3,432.8 C762.9,431.3 763.3,431.3 764.0,440.0 C764.7,450.5 765.2,480.8 766.0,490.0 C766.8,491.5 767.2,491.5 768.4,490.0 C769.6,477.7 771.7,426.4 772.8,423.0 C773.9,421.5 774.0,471.0 774.5,471.7 C775.0,472.4 775.2,430.3 775.7,426.7 C776.2,425.2 776.7,453.8 777.2,452.3 C777.7,444.9 778.0,385.7 778.6,386.6 C779.2,387.5 780.0,448.1 780.6,457.0 C781.2,458.5 781.3,437.9 781.8,435.2 C782.3,433.7 782.5,444.0 783.5,442.5 C784.5,428.2 786.3,364.0 787.4,357.3 C788.5,355.8 788.8,403.5 789.6,406.0 C790.4,407.5 790.4,372.9 791.5,370.7 C792.6,369.2 794.2,395.4 795.7,393.9 C797.2,388.3 797.9,338.8 799.6,340.3 C801.3,351.7 803.6,436.3 804.9,455.9 C806.2,457.4 805.9,445.9 806.6,447.4 C807.3,453.7 807.7,491.5 808.6,490.0 C809.5,482.4 810.5,431.6 811.7,406.0 C812.9,380.4 814.4,351.8 815.4,350.5 C816.4,349.2 816.4,386.7 817.0,398.7 C817.6,410.7 818.1,399.1 818.7,415.8 C819.3,432.5 819.3,481.3 820.4,490.0 C821.5,491.5 823.5,463.2 824.7,463.2 C825.9,463.2 826.0,491.5 826.7,490.0 C827.4,488.0 827.6,452.3 828.4,452.3 C829.2,452.3 830.0,483.1 830.8,490.0 C831.6,491.5 831.6,491.5 832.5,490.0 C833.4,461.2 834.6,341.9 835.7,333.0 C836.8,331.5 837.6,431.9 838.6,441.3 C839.6,442.8 840.4,382.6 841.3,384.1 C842.2,393.0 842.8,488.4 843.7,490.0 C844.6,491.5 845.2,405.5 846.2,392.6 C847.2,391.1 848.2,401.5 849.1,419.4 C850.0,437.3 850.2,483.7 851.0,490.0 C851.8,491.5 852.4,453.5 853.2,453.5 C854.0,453.5 854.2,483.3 855.2,490.0 C856.2,491.5 857.3,491.5 858.5,490.0 C859.7,469.2 861.0,391.1 862.0,376.8 C863.0,375.3 863.0,409.3 863.7,412.0 C864.4,413.5 864.6,389.9 865.6,391.4 C866.6,405.7 868.1,478.4 869.0,490.0 C869.9,491.5 869.8,454.7 870.5,454.7 C871.2,454.7 871.8,491.5 872.7,490.0 C873.6,484.0 874.0,421.8 875.4,421.8 C876.8,421.8 878.6,491.5 880.2,490.0 C881.8,477.8 882.9,379.1 883.9,355.0 C884.9,353.5 885.1,353.5 885.6,358.6 C886.1,377.1 886.1,447.1 886.8,456.0 C887.5,457.5 888.1,412.1 889.2,407.2 C890.3,405.7 891.9,430.6 892.9,429.1 C893.9,424.9 894.3,392.2 894.8,384.1 C895.3,382.6 895.6,384.8 895.8,385.0 L896,490 Z" fill="url(#sf)" opacity="0.95"/><clipPath id="fclip"><path d="M291.5,490 L291.5,490  C291.9,490.0 291.9,491.5 293.7,490.0 C295.5,465.6 299.1,356.9 301.4,356.9 C303.7,356.9 304.9,481.2 306.5,490.0 C308.1,491.5 309.0,404.8 310.2,404.8 C311.4,404.8 311.8,491.5 313.1,490.0 C314.4,473.3 315.5,316.0 317.3,313.5 C319.1,312.0 321.3,464.3 322.9,476.6 C324.5,478.1 324.8,379.0 325.8,380.5 C326.8,383.0 327.5,489.3 328.5,490.0 C329.5,490.7 330.3,384.1 331.4,384.1 C332.5,384.1 333.4,486.2 334.5,490.0 C335.6,491.5 336.5,404.8 337.5,404.8 C338.5,404.8 338.7,476.4 339.9,490.0 C341.1,491.5 342.9,479.0 344.0,479.0 C345.1,479.0 344.8,491.5 346.0,490.0 C347.2,462.8 349.2,330.6 350.8,330.6 C352.4,330.6 353.2,464.8 354.5,490.0 C355.8,491.5 357.0,468.0 358.1,468.0 C359.2,468.0 358.9,491.5 360.6,490.0 C362.3,471.9 365.8,382.4 367.4,369.5 C369.0,368.0 368.3,420.9 369.1,419.4 C369.9,417.2 370.4,355.8 371.5,357.3 C372.6,370.2 374.0,484.6 375.2,490.0 C376.4,491.5 377.4,400.7 378.3,386.6 C379.2,385.1 379.2,400.1 380.0,413.0 C380.8,425.9 381.5,458.5 382.5,457.0 C383.5,438.3 384.2,311.0 385.4,311.0 C386.6,311.0 388.3,434.4 389.3,457.0 C390.3,458.5 390.0,432.5 391.0,434.0 C392.0,440.1 393.0,491.5 394.6,490.0 C396.2,468.1 397.9,320.4 399.5,314.8 C401.1,313.3 402.2,448.0 403.5,459.6 C404.8,461.1 405.2,376.5 406.4,378.0 C407.6,383.6 408.8,491.5 410.1,490.0 C411.4,483.3 412.1,348.9 413.3,341.5 C414.5,340.0 415.2,444.2 416.9,449.8 C418.5,451.3 420.7,376.0 422.3,372.0 C423.9,370.5 424.3,429.5 425.4,428.0 C426.5,417.8 427.1,315.0 428.3,316.5 C429.5,324.3 431.0,457.4 432.0,470.5 C433.0,472.0 432.6,386.7 433.5,387.8 C434.4,388.9 435.5,475.9 436.9,476.6 C438.3,477.3 440.1,406.9 441.2,391.4 C442.3,389.9 442.2,389.9 443.0,392.0 C443.8,397.1 444.6,420.9 445.4,419.4 C446.2,404.5 446.6,325.6 447.3,311.0 C448.0,309.5 448.1,309.5 449.0,340.0 C449.9,372.8 451.0,466.3 452.2,490.0 C453.4,491.5 454.5,469.3 455.4,469.3 C456.3,469.3 456.1,491.5 457.0,490.0 C457.9,485.1 458.8,458.3 460.2,442.5 C461.6,426.7 463.1,402.1 464.4,403.6 C465.7,412.3 465.5,474.2 467.5,490.0 C469.5,491.5 473.4,491.5 475.3,490.0 C477.2,473.6 476.7,400.7 477.7,400.7 C478.7,400.7 479.7,491.5 480.7,490.0 C481.7,487.5 482.1,387.0 483.1,387.0 C484.1,387.0 485.0,491.5 486.3,490.0 C487.6,476.1 489.3,322.4 490.4,311.0 C491.5,309.5 491.1,429.5 492.3,428.0 C493.5,421.9 495.1,276.0 496.7,277.5 C498.3,288.9 499.4,464.4 500.9,490.0 C502.4,491.5 503.7,431.1 504.9,417.0 C506.1,411.8 506.2,418.5 507.3,413.3 C508.4,403.7 510.1,371.7 511.0,364.6 C511.9,363.1 511.4,375.9 512.2,374.4 C513.0,366.6 513.3,320.5 515.1,322.0 C516.9,343.2 520.2,480.6 521.9,490.0 C523.6,491.5 523.3,373.2 524.3,373.2 C525.3,373.2 524.3,468.6 527.3,490.0 C530.5,491.5 538.7,491.5 541.9,490.0 C545.0,459.7 543.8,330.6 545.0,324.5 C546.2,323.0 547.7,440.0 548.7,457.0 C549.7,458.5 549.5,415.5 550.4,417.0 C551.3,423.1 552.0,476.6 553.5,490.0 C555.0,491.5 556.8,491.5 558.4,490.0 C560.0,472.6 560.9,407.7 562.0,395.0 C563.1,393.5 563.5,421.3 564.5,420.6 C565.5,419.9 566.4,390.3 567.4,391.4 C568.4,392.5 568.6,428.2 569.8,426.7 C571.0,415.1 573.1,336.7 574.2,328.0 C575.3,326.5 574.9,380.7 575.9,379.2 C576.9,369.2 578.0,277.0 579.6,273.4 C581.2,271.9 583.1,359.6 584.4,359.8 C585.7,360.0 585.6,273.1 586.9,274.6 C588.2,287.5 590.0,419.5 591.3,430.4 C592.6,431.9 593.2,332.7 594.2,334.2 C595.2,337.3 595.8,434.5 596.6,447.4 C597.4,448.9 597.9,403.3 598.6,404.8 C599.3,412.6 599.6,490.8 600.3,490.0 C601.0,489.2 601.4,411.0 602.2,400.7 C603.0,399.2 603.7,435.5 604.6,434.0 C605.5,425.4 606.5,368.0 607.2,353.7 C607.9,352.2 607.6,352.2 608.5,356.0 C609.4,381.0 610.5,465.4 612.3,490.0 C614.1,491.5 616.7,491.5 618.4,490.0 C620.1,462.3 620.3,339.0 621.5,339.0 C622.7,339.0 623.7,478.6 625.0,490.0 C626.3,491.5 627.5,401.0 628.6,401.0 C629.7,401.0 630.0,473.7 631.0,490.0 C632.0,491.5 633.2,491.5 634.2,490.0 C635.2,475.9 635.6,421.8 636.6,413.3 C637.6,411.8 638.7,445.2 639.6,443.7 C640.5,434.8 640.5,363.5 641.5,365.0 C642.5,373.5 643.9,482.7 645.2,490.0 C646.5,491.5 647.8,408.6 648.8,404.8 C649.8,403.3 650.1,460.2 650.8,469.3 C651.5,470.8 651.7,453.2 652.5,454.7 C653.3,458.5 654.0,491.5 654.9,490.0 C655.8,479.1 656.2,395.0 657.3,395.0 C658.4,395.0 658.2,472.6 661.0,490.0 C663.8,491.5 669.9,491.5 672.7,490.0 C675.5,469.9 674.6,380.5 676.1,380.5 C677.6,380.5 679.4,484.4 680.9,490.0 C682.4,491.5 683.1,417.9 684.1,411.0 C685.1,409.5 685.4,453.8 686.5,452.3 C687.6,443.8 688.9,363.1 690.2,364.6 C691.5,371.5 692.6,480.0 693.8,490.0 C695.0,491.5 695.6,419.4 696.7,419.4 C697.8,419.4 698.6,491.5 699.9,490.0 C701.2,486.4 702.4,400.0 704.0,400.0 C705.6,400.0 706.9,481.8 708.4,490.0 C709.9,491.5 711.0,454.6 712.0,445.0 C713.0,436.2 712.6,446.5 713.7,437.7 C714.8,419.8 716.2,346.1 717.8,347.6 C719.4,357.2 721.1,465.4 722.2,490.0 C723.3,491.5 723.0,491.5 724.0,482.0 C725.0,458.5 726.1,360.2 727.5,361.7 C728.9,363.2 730.2,472.6 731.4,490.0 C732.6,491.5 733.1,456.6 733.9,456.6 C734.7,456.6 734.7,491.5 735.6,490.0 C736.5,467.3 737.4,333.0 738.7,333.0 C740.0,333.0 741.6,474.4 742.9,490.0 C744.2,491.5 744.8,423.1 745.8,418.2 C746.8,416.7 747.4,454.9 748.5,463.2 C749.6,464.7 750.9,464.7 751.9,463.2 C752.9,461.6 753.1,464.7 753.8,454.7 C754.5,443.3 754.6,399.5 755.5,401.0 C756.4,407.5 757.8,473.7 758.7,490.0 C759.6,491.5 759.8,491.5 760.5,490.0 C761.2,479.5 761.7,442.0 762.3,432.8 C762.9,431.3 763.3,431.3 764.0,440.0 C764.7,450.5 765.2,480.8 766.0,490.0 C766.8,491.5 767.2,491.5 768.4,490.0 C769.6,477.7 771.7,426.4 772.8,423.0 C773.9,421.5 774.0,471.0 774.5,471.7 C775.0,472.4 775.2,430.3 775.7,426.7 C776.2,425.2 776.7,453.8 777.2,452.3 C777.7,444.9 778.0,385.7 778.6,386.6 C779.2,387.5 780.0,448.1 780.6,457.0 C781.2,458.5 781.3,437.9 781.8,435.2 C782.3,433.7 782.5,444.0 783.5,442.5 C784.5,428.2 786.3,364.0 787.4,357.3 C788.5,355.8 788.8,403.5 789.6,406.0 C790.4,407.5 790.4,372.9 791.5,370.7 C792.6,369.2 794.2,395.4 795.7,393.9 C797.2,388.3 797.9,338.8 799.6,340.3 C801.3,351.7 803.6,436.3 804.9,455.9 C806.2,457.4 805.9,445.9 806.6,447.4 C807.3,453.7 807.7,491.5 808.6,490.0 C809.5,482.4 810.5,431.6 811.7,406.0 C812.9,380.4 814.4,351.8 815.4,350.5 C816.4,349.2 816.4,386.7 817.0,398.7 C817.6,410.7 818.1,399.1 818.7,415.8 C819.3,432.5 819.3,481.3 820.4,490.0 C821.5,491.5 823.5,463.2 824.7,463.2 C825.9,463.2 826.0,491.5 826.7,490.0 C827.4,488.0 827.6,452.3 828.4,452.3 C829.2,452.3 830.0,483.1 830.8,490.0 C831.6,491.5 831.6,491.5 832.5,490.0 C833.4,461.2 834.6,341.9 835.7,333.0 C836.8,331.5 837.6,431.9 838.6,441.3 C839.6,442.8 840.4,382.6 841.3,384.1 C842.2,393.0 842.8,488.4 843.7,490.0 C844.6,491.5 845.2,405.5 846.2,392.6 C847.2,391.1 848.2,401.5 849.1,419.4 C850.0,437.3 850.2,483.7 851.0,490.0 C851.8,491.5 852.4,453.5 853.2,453.5 C854.0,453.5 854.2,483.3 855.2,490.0 C856.2,491.5 857.3,491.5 858.5,490.0 C859.7,469.2 861.0,391.1 862.0,376.8 C863.0,375.3 863.0,409.3 863.7,412.0 C864.4,413.5 864.6,389.9 865.6,391.4 C866.6,405.7 868.1,478.4 869.0,490.0 C869.9,491.5 869.8,454.7 870.5,454.7 C871.2,454.7 871.8,491.5 872.7,490.0 C873.6,484.0 874.0,421.8 875.4,421.8 C876.8,421.8 878.6,491.5 880.2,490.0 C881.8,477.8 882.9,379.1 883.9,355.0 C884.9,353.5 885.1,353.5 885.6,358.6 C886.1,377.1 886.1,447.1 886.8,456.0 C887.5,457.5 888.1,412.1 889.2,407.2 C890.3,405.7 891.9,430.6 892.9,429.1 C893.9,424.9 894.3,392.2 894.8,384.1 C895.3,382.6 895.6,384.8 895.8,385.0 L896,490 Z"/></clipPath><rect x="579" y="120" width="29" height="365" fill="#ffffff" opacity="0.18" clip-path="url(#fclip)"/><line x1="593.1" y1="120" x2="593.1" y2="485" stroke="#c82020" stroke-width="1.5"/><path d="M291.5,490.0 C291.9,490.0 291.9,491.5 293.7,490.0 C295.5,465.6 299.1,356.9 301.4,356.9 C303.7,356.9 304.9,481.2 306.5,490.0 C308.1,491.5 309.0,404.8 310.2,404.8 C311.4,404.8 311.8,491.5 313.1,490.0 C314.4,473.3 315.5,316.0 317.3,313.5 C319.1,312.0 321.3,464.3 322.9,476.6 C324.5,478.1 324.8,379.0 325.8,380.5 C326.8,383.0 327.5,489.3 328.5,490.0 C329.5,490.7 330.3,384.1 331.4,384.1 C332.5,384.1 333.4,486.2 334.5,490.0 C335.6,491.5 336.5,404.8 337.5,404.8 C338.5,404.8 338.7,476.4 339.9,490.0 C341.1,491.5 342.9,479.0 344.0,479.0 C345.1,479.0 344.8,491.5 346.0,490.0 C347.2,462.8 349.2,330.6 350.8,330.6 C352.4,330.6 353.2,464.8 354.5,490.0 C355.8,491.5 357.0,468.0 358.1,468.0 C359.2,468.0 358.9,491.5 360.6,490.0 C362.3,471.9 365.8,382.4 367.4,369.5 C369.0,368.0 368.3,420.9 369.1,419.4 C369.9,417.2 370.4,355.8 371.5,357.3 C372.6,370.2 374.0,484.6 375.2,490.0 C376.4,491.5 377.4,400.7 378.3,386.6 C379.2,385.1 379.2,400.1 380.0,413.0 C380.8,425.9 381.5,458.5 382.5,457.0 C383.5,438.3 384.2,311.0 385.4,311.0 C386.6,311.0 388.3,434.4 389.3,457.0 C390.3,458.5 390.0,432.5 391.0,434.0 C392.0,440.1 393.0,491.5 394.6,490.0 C396.2,468.1 397.9,320.4 399.5,314.8 C401.1,313.3 402.2,448.0 403.5,459.6 C404.8,461.1 405.2,376.5 406.4,378.0 C407.6,383.6 408.8,491.5 410.1,490.0 C411.4,483.3 412.1,348.9 413.3,341.5 C414.5,340.0 415.2,444.2 416.9,449.8 C418.5,451.3 420.7,376.0 422.3,372.0 C423.9,370.5 424.3,429.5 425.4,428.0 C426.5,417.8 427.1,315.0 428.3,316.5 C429.5,324.3 431.0,457.4 432.0,470.5 C433.0,472.0 432.6,386.7 433.5,387.8 C434.4,388.9 435.5,475.9 436.9,476.6 C438.3,477.3 440.1,406.9 441.2,391.4 C442.3,389.9 442.2,389.9 443.0,392.0 C443.8,397.1 444.6,420.9 445.4,419.4 C446.2,404.5 446.6,325.6 447.3,311.0 C448.0,309.5 448.1,309.5 449.0,340.0 C449.9,372.8 451.0,466.3 452.2,490.0 C453.4,491.5 454.5,469.3 455.4,469.3 C456.3,469.3 456.1,491.5 457.0,490.0 C457.9,485.1 458.8,458.3 460.2,442.5 C461.6,426.7 463.1,402.1 464.4,403.6 C465.7,412.3 465.5,474.2 467.5,490.0 C469.5,491.5 473.4,491.5 475.3,490.0 C477.2,473.6 476.7,400.7 477.7,400.7 C478.7,400.7 479.7,491.5 480.7,490.0 C481.7,487.5 482.1,387.0 483.1,387.0 C484.1,387.0 485.0,491.5 486.3,490.0 C487.6,476.1 489.3,322.4 490.4,311.0 C491.5,309.5 491.1,429.5 492.3,428.0 C493.5,421.9 495.1,276.0 496.7,277.5 C498.3,288.9 499.4,464.4 500.9,490.0 C502.4,491.5 503.7,431.1 504.9,417.0 C506.1,411.8 506.2,418.5 507.3,413.3 C508.4,403.7 510.1,371.7 511.0,364.6 C511.9,363.1 511.4,375.9 512.2,374.4 C513.0,366.6 513.3,320.5 515.1,322.0 C516.9,343.2 520.2,480.6 521.9,490.0 C523.6,491.5 523.3,373.2 524.3,373.2 C525.3,373.2 524.3,468.6 527.3,490.0 C530.5,491.5 538.7,491.5 541.9,490.0 C545.0,459.7 543.8,330.6 545.0,324.5 C546.2,323.0 547.7,440.0 548.7,457.0 C549.7,458.5 549.5,415.5 550.4,417.0 C551.3,423.1 552.0,476.6 553.5,490.0 C555.0,491.5 556.8,491.5 558.4,490.0 C560.0,472.6 560.9,407.7 562.0,395.0 C563.1,393.5 563.5,421.3 564.5,420.6 C565.5,419.9 566.4,390.3 567.4,391.4 C568.4,392.5 568.6,428.2 569.8,426.7 C571.0,415.1 573.1,336.7 574.2,328.0 C575.3,326.5 574.9,380.7 575.9,379.2 C576.9,369.2 578.0,277.0 579.6,273.4 C581.2,271.9 583.1,359.6 584.4,359.8 C585.7,360.0 585.6,273.1 586.9,274.6 C588.2,287.5 590.0,419.5 591.3,430.4 C592.6,431.9 593.2,332.7 594.2,334.2 C595.2,337.3 595.8,434.5 596.6,447.4 C597.4,448.9 597.9,403.3 598.6,404.8 C599.3,412.6 599.6,490.8 600.3,490.0 C601.0,489.2 601.4,411.0 602.2,400.7 C603.0,399.2 603.7,435.5 604.6,434.0 C605.5,425.4 606.5,368.0 607.2,353.7 C607.9,352.2 607.6,352.2 608.5,356.0 C609.4,381.0 610.5,465.4 612.3,490.0 C614.1,491.5 616.7,491.5 618.4,490.0 C620.1,462.3 620.3,339.0 621.5,339.0 C622.7,339.0 623.7,478.6 625.0,490.0 C626.3,491.5 627.5,401.0 628.6,401.0 C629.7,401.0 630.0,473.7 631.0,490.0 C632.0,491.5 633.2,491.5 634.2,490.0 C635.2,475.9 635.6,421.8 636.6,413.3 C637.6,411.8 638.7,445.2 639.6,443.7 C640.5,434.8 640.5,363.5 641.5,365.0 C642.5,373.5 643.9,482.7 645.2,490.0 C646.5,491.5 647.8,408.6 648.8,404.8 C649.8,403.3 650.1,460.2 650.8,469.3 C651.5,470.8 651.7,453.2 652.5,454.7 C653.3,458.5 654.0,491.5 654.9,490.0 C655.8,479.1 656.2,395.0 657.3,395.0 C658.4,395.0 658.2,472.6 661.0,490.0 C663.8,491.5 669.9,491.5 672.7,490.0 C675.5,469.9 674.6,380.5 676.1,380.5 C677.6,380.5 679.4,484.4 680.9,490.0 C682.4,491.5 683.1,417.9 684.1,411.0 C685.1,409.5 685.4,453.8 686.5,452.3 C687.6,443.8 688.9,363.1 690.2,364.6 C691.5,371.5 692.6,480.0 693.8,490.0 C695.0,491.5 695.6,419.4 696.7,419.4 C697.8,419.4 698.6,491.5 699.9,490.0 C701.2,486.4 702.4,400.0 704.0,400.0 C705.6,400.0 706.9,481.8 708.4,490.0 C709.9,491.5 711.0,454.6 712.0,445.0 C713.0,436.2 712.6,446.5 713.7,437.7 C714.8,419.8 716.2,346.1 717.8,347.6 C719.4,357.2 721.1,465.4 722.2,490.0 C723.3,491.5 723.0,491.5 724.0,482.0 C725.0,458.5 726.1,360.2 727.5,361.7 C728.9,363.2 730.2,472.6 731.4,490.0 C732.6,491.5 733.1,456.6 733.9,456.6 C734.7,456.6 734.7,491.5 735.6,490.0 C736.5,467.3 737.4,333.0 738.7,333.0 C740.0,333.0 741.6,474.4 742.9,490.0 C744.2,491.5 744.8,423.1 745.8,418.2 C746.8,416.7 747.4,454.9 748.5,463.2 C749.6,464.7 750.9,464.7 751.9,463.2 C752.9,461.6 753.1,464.7 753.8,454.7 C754.5,443.3 754.6,399.5 755.5,401.0 C756.4,407.5 757.8,473.7 758.7,490.0 C759.6,491.5 759.8,491.5 760.5,490.0 C761.2,479.5 761.7,442.0 762.3,432.8 C762.9,431.3 763.3,431.3 764.0,440.0 C764.7,450.5 765.2,480.8 766.0,490.0 C766.8,491.5 767.2,491.5 768.4,490.0 C769.6,477.7 771.7,426.4 772.8,423.0 C773.9,421.5 774.0,471.0 774.5,471.7 C775.0,472.4 775.2,430.3 775.7,426.7 C776.2,425.2 776.7,453.8 777.2,452.3 C777.7,444.9 778.0,385.7 778.6,386.6 C779.2,387.5 780.0,448.1 780.6,457.0 C781.2,458.5 781.3,437.9 781.8,435.2 C782.3,433.7 782.5,444.0 783.5,442.5 C784.5,428.2 786.3,364.0 787.4,357.3 C788.5,355.8 788.8,403.5 789.6,406.0 C790.4,407.5 790.4,372.9 791.5,370.7 C792.6,369.2 794.2,395.4 795.7,393.9 C797.2,388.3 797.9,338.8 799.6,340.3 C801.3,351.7 803.6,436.3 804.9,455.9 C806.2,457.4 805.9,445.9 806.6,447.4 C807.3,453.7 807.7,491.5 808.6,490.0 C809.5,482.4 810.5,431.6 811.7,406.0 C812.9,380.4 814.4,351.8 815.4,350.5 C816.4,349.2 816.4,386.7 817.0,398.7 C817.6,410.7 818.1,399.1 818.7,415.8 C819.3,432.5 819.3,481.3 820.4,490.0 C821.5,491.5 823.5,463.2 824.7,463.2 C825.9,463.2 826.0,491.5 826.7,490.0 C827.4,488.0 827.6,452.3 828.4,452.3 C829.2,452.3 830.0,483.1 830.8,490.0 C831.6,491.5 831.6,491.5 832.5,490.0 C833.4,461.2 834.6,341.9 835.7,333.0 C836.8,331.5 837.6,431.9 838.6,441.3 C839.6,442.8 840.4,382.6 841.3,384.1 C842.2,393.0 842.8,488.4 843.7,490.0 C844.6,491.5 845.2,405.5 846.2,392.6 C847.2,391.1 848.2,401.5 849.1,419.4 C850.0,437.3 850.2,483.7 851.0,490.0 C851.8,491.5 852.4,453.5 853.2,453.5 C854.0,453.5 854.2,483.3 855.2,490.0 C856.2,491.5 857.3,491.5 858.5,490.0 C859.7,469.2 861.0,391.1 862.0,376.8 C863.0,375.3 863.0,409.3 863.7,412.0 C864.4,413.5 864.6,389.9 865.6,391.4 C866.6,405.7 868.1,478.4 869.0,490.0 C869.9,491.5 869.8,454.7 870.5,454.7 C871.2,454.7 871.8,491.5 872.7,490.0 C873.6,484.0 874.0,421.8 875.4,421.8 C876.8,421.8 878.6,491.5 880.2,490.0 C881.8,477.8 882.9,379.1 883.9,355.0 C884.9,353.5 885.1,353.5 885.6,358.6 C886.1,377.1 886.1,447.1 886.8,456.0 C887.5,457.5 888.1,412.1 889.2,407.2 C890.3,405.7 891.9,430.6 892.9,429.1 C893.9,424.9 894.3,392.2 894.8,384.1 C895.3,382.6 895.6,384.8 895.8,385.0" fill="none" stroke="#eef0fa" stroke-width="1.05" stroke-linejoin="round"/></g></svg><div class="t" style="right:707px;top:114.6px;font-size:12px;color:#d0d0d0;transform:scaleX(0.91);transform-origin:100% 50%;">-10</div><div class="t" style="right:707px;top:175.4px;font-size:12px;color:#d0d0d0;transform:scaleX(0.91);transform-origin:100% 50%;">-15</div><div class="t" style="right:707px;top:236.2px;font-size:12px;color:#d0d0d0;transform:scaleX(0.91);transform-origin:100% 50%;">-20</div><div class="t" style="right:707px;top:296.9px;font-size:12px;color:#d0d0d0;transform:scaleX(0.91);transform-origin:100% 50%;">-25</div><div class="t" style="right:707px;top:357.7px;font-size:12px;color:#d0d0d0;transform:scaleX(0.91);transform-origin:100% 50%;">-30</div><div class="t" style="right:707px;top:418.5px;font-size:12px;color:#d0d0d0;transform:scaleX(0.91);transform-origin:100% 50%;">-35</div><div class="t" style="right:707px;top:479.3px;font-size:12px;color:#d0d0d0;transform:scaleX(0.91);transform-origin:100% 50%;">-40</div><div class="t" style="left:263.5px;width:80px;text-align:center;top:495.0px;font-size:11px;color:#d0d0d0;">16.9 k</div><div class="t" style="left:360.2px;width:80px;text-align:center;top:495.0px;font-size:11px;color:#d0d0d0;">17 k</div><div class="t" style="left:456.9px;width:80px;text-align:center;top:495.0px;font-size:11px;color:#d0d0d0;">17.1 k</div><div class="t" style="left:553.6px;width:80px;text-align:center;top:495.0px;font-size:11px;color:#d0d0d0;">17.2 k</div><div class="t" style="left:650.3px;width:80px;text-align:center;top:495.0px;font-size:11px;color:#d0d0d0;">17.3 k</div><div class="t" style="left:747.0px;width:80px;text-align:center;top:495.0px;font-size:11px;color:#d0d0d0;">17.4 k</div><div class="t" style="left:843.7px;width:80px;text-align:center;top:495.0px;font-size:11px;color:#d0d0d0;">17.5 k</div><div class="t" style="left:901px;width:20px;text-align:center;top:423.0px;font-size:11px;color:#e0e0e0;">14</div><svg style="position:absolute;left:0;top:0" width="996" height="946" viewBox="0 0 996 946"><defs><filter id="bl" x="-200%" y="-50%" width="500%" height="200%"><feGaussianBlur stdDeviation="0.6 2"/></filter><filter id="bl2" x="-200%" y="-10%" width="500%" height="120%"><feGaussianBlur stdDeviation="0.8 6"/></filter><filter id="cb" x="-50%" y="-10%" width="200%" height="120%"><feGaussianBlur stdDeviation="1.3"/></filter></defs><clipPath id="wclip"><rect x="290" y="519" width="606" height="410"/></clipPath><rect x="290" y="519" width="606" height="410" fill="#020222"/><g clip-path="url(#wclip)"><rect x="301.75" y="519" width="1.5" height="410" fill="#1a28b0" opacity="0.21"/><rect x="316.25" y="519" width="1.5" height="410" fill="#1a28b0" opacity="0.09"/><rect x="353.25" y="519" width="1.5" height="410" fill="#1a28b0" opacity="0.15"/><rect x="400.20" y="519" width="1.2" height="410" fill="#1a28b0" opacity="0.42"/><rect x="411.25" y="519" width="1.5" height="410" fill="#1a28b0" opacity="0.09"/><rect x="448.25" y="519" width="1.5" height="410" fill="#1a28b0" opacity="0.18"/><rect x="496.90" y="519" width="1.2" height="410" fill="#1a28b0" opacity="0.36"/><rect x="513.25" y="519" width="1.5" height="410" fill="#1a28b0" opacity="0.12"/><rect x="545.75" y="519" width="1.5" height="410" fill="#1a28b0" opacity="0.12"/><rect x="577.75" y="519" width="1.5" height="410" fill="#1a28b0" opacity="0.15"/><rect x="583.75" y="519" width="1.5" height="410" fill="#1a28b0" opacity="0.27"/><rect x="591.75" y="519" width="1.5" height="410" fill="#1a28b0" opacity="0.18"/><rect x="596.25" y="519" width="1.5" height="410" fill="#1a28b0" opacity="0.24"/><rect x="689.75" y="519" width="1.5" height="410" fill="#1a28b0" opacity="0.09"/><rect x="739.25" y="519" width="1.5" height="410" fill="#1a28b0" opacity="0.12"/><rect x="791.25" y="519" width="1.5" height="410" fill="#1a28b0" opacity="0.13"/><rect x="837.25" y="519" width="1.5" height="410" fill="#1a28b0" opacity="0.12"/><rect x="884.75" y="519" width="1.5" height="410" fill="#1a28b0" opacity="0.15"/><ellipse cx="302.3" cy="568" rx="1.4" ry="7" fill="#2858ff" opacity="0.37" filter="url(#bl)"/><ellipse cx="302.3" cy="636" rx="1.4" ry="5" fill="#2858ff" opacity="0.37" filter="url(#bl)"/><ellipse cx="302.5" cy="790" rx="1.4" ry="6" fill="#2858ff" opacity="0.32" filter="url(#bl)"/><ellipse cx="303" cy="864" rx="1.4" ry="14" fill="#2858ff" opacity="0.21" filter="url(#bl)"/><ellipse cx="400.5" cy="547" rx="1.4" ry="11" fill="#2858ff" opacity="1.00" filter="url(#bl)"/><ellipse cx="400.5" cy="547" rx="0.8" ry="6.6" fill="#80c0ff" opacity="0.95" filter="url(#bl)"/><ellipse cx="400.7" cy="636" rx="1.4" ry="8" fill="#2858ff" opacity="0.47" filter="url(#bl)"/><ellipse cx="401" cy="696" rx="1.4" ry="6" fill="#2858ff" opacity="0.89" filter="url(#bl)"/><ellipse cx="401" cy="696" rx="0.8" ry="3.6" fill="#80c0ff" opacity="0.95" filter="url(#bl)"/><ellipse cx="402.5" cy="831" rx="1.4" ry="16" fill="#2858ff" opacity="0.89" filter="url(#bl)"/><ellipse cx="402.5" cy="831" rx="0.8" ry="9.6" fill="#80c0ff" opacity="0.95" filter="url(#bl)"/><ellipse cx="403" cy="897" rx="1.4" ry="12" fill="#2858ff" opacity="0.47" filter="url(#bl)"/><ellipse cx="401.5" cy="760" rx="1.4" ry="8" fill="#2858ff" opacity="0.32" filter="url(#bl)"/><ellipse cx="449" cy="547" rx="1.4" ry="8" fill="#2858ff" opacity="0.32" filter="url(#bl)"/><ellipse cx="354.4" cy="802" rx="1.4" ry="6" fill="#2858ff" opacity="0.21" filter="url(#bl)"/><ellipse cx="354.4" cy="880" rx="1.4" ry="10" fill="#2858ff" opacity="0.21" filter="url(#bl)"/><ellipse cx="497.3" cy="528" rx="1.4" ry="7" fill="#2858ff" opacity="1.00" filter="url(#bl)"/><ellipse cx="497.3" cy="528" rx="0.8" ry="4.2" fill="#80c0ff" opacity="0.95" filter="url(#bl)"/><ellipse cx="584.3" cy="686" rx="1.4" ry="6" fill="#2858ff" opacity="0.95" filter="url(#bl)"/><ellipse cx="584.3" cy="686" rx="0.8" ry="3.6" fill="#80c0ff" opacity="0.95" filter="url(#bl)"/><ellipse cx="584.3" cy="650" rx="1.4" ry="6" fill="#2858ff" opacity="0.37" filter="url(#bl)"/><ellipse cx="584.3" cy="758" rx="1.4" ry="7" fill="#2858ff" opacity="1.00" filter="url(#bl)"/><ellipse cx="584.3" cy="758" rx="0.8" ry="4.2" fill="#80c0ff" opacity="0.95" filter="url(#bl)"/><ellipse cx="584.3" cy="810" rx="1.4" ry="6" fill="#2858ff" opacity="0.95" filter="url(#bl)"/><ellipse cx="584.3" cy="810" rx="0.8" ry="3.6" fill="#80c0ff" opacity="0.95" filter="url(#bl)"/><ellipse cx="580.9" cy="880" rx="1.4" ry="6" fill="#2858ff" opacity="0.89" filter="url(#bl)"/><ellipse cx="580.9" cy="880" rx="0.8" ry="3.6" fill="#80c0ff" opacity="0.95" filter="url(#bl)"/><ellipse cx="596.6" cy="834" rx="1.4" ry="8" fill="#2858ff" opacity="1.00" filter="url(#bl)"/><ellipse cx="596.6" cy="834" rx="0.8" ry="4.8" fill="#80c0ff" opacity="0.95" filter="url(#bl)"/><ellipse cx="596.6" cy="905" rx="1.4" ry="6" fill="#2858ff" opacity="0.32" filter="url(#bl)"/><ellipse cx="486" cy="880" rx="1.4" ry="5" fill="#2858ff" opacity="0.32" filter="url(#bl)"/><ellipse cx="690.5" cy="551" rx="1.4" ry="8" fill="#2858ff" opacity="0.26" filter="url(#bl)"/><ellipse cx="592" cy="710" rx="1.4" ry="5" fill="#2858ff" opacity="0.26" filter="url(#bl)"/><path d="M635.8,616.0 L637.6,630.0 L638.1,639.0 L637.0,652.0 L635.2,662.0 L632.8,667.0 L628.0,683.0 L623.1,700.0 L618.0,710.2 L613.6,721.6 L609.2,728.0 L605.4,743.0 L601.6,753.3 L599.0,763.5 L596.5,768.5 L595.9,778.7 L594.0,788.8 L594.0,799.0 L595.2,810.4" stroke="#2a60ff" stroke-width="6" fill="none" stroke-linecap="round" stroke-linejoin="round" opacity="0.8" filter="url(#cb)"/><path d="M635.8,616.0 L637.6,630.0 L638.1,639.0 L637.0,652.0" stroke="#b0d8ff" stroke-width="2.4" fill="none" stroke-linecap="round"/><path d="M637.0,652.0 L635.2,662.0 L632.8,667.0 L628.0,683.0 L623.1,700.0 L618.0,710.2 L613.6,721.6" stroke="#e0f4ff" stroke-width="3.2" fill="none" stroke-linecap="round"/><path d="M613.6,721.6 L609.2,728.0 L605.4,743.0 L601.6,753.3 L599.0,763.5 L596.5,768.5" stroke="#ffff40" stroke-width="3.8" fill="none" stroke-linecap="round"/><path d="M596.5,768.5 L595.9,778.7 L594.0,788.8 L594.0,799.0" stroke="#ffc000" stroke-width="4" fill="none" stroke-linecap="round"/><path d="M596.2,771 L595.5,780 L594.3,792" stroke="#e83800" stroke-width="2" fill="none"/><path d="M594.0,799.0 L595.2,810.4" stroke="#ffe860" stroke-width="3.6" fill="none" stroke-linecap="round"/><path d="M612,719 L615,724" stroke="#ffffff" stroke-width="2" fill="none"/></g><rect x="906" y="530" width="10" height="383" fill="url(#wfc)"/></svg><div class="t" style="left:921px;width:64px;text-align:center;top:93.7px;font-size:12px;color:#000;transform:scaleX(0.91);transform-origin:50% 50%;">Zoom</div><div style="position:absolute;left:949px;top:117px;width:3px;height:171px;border-left:1px solid #a0a0a0;border-right:1px solid #fff;background:#e6e6e6;"></div><div style="position:absolute;left:935px;top:124px;width:4px;height:1px;background:#c4c4c4;"></div><div style="position:absolute;left:962px;top:124px;width:4px;height:1px;background:#c4c4c4;"></div><div style="position:absolute;left:935px;top:139px;width:4px;height:1px;background:#c4c4c4;"></div><div style="position:absolute;left:962px;top:139px;width:4px;height:1px;background:#c4c4c4;"></div><div style="position:absolute;left:935px;top:155px;width:4px;height:1px;background:#c4c4c4;"></div><div style="position:absolute;left:962px;top:155px;width:4px;height:1px;background:#c4c4c4;"></div><div style="position:absolute;left:935px;top:171px;width:4px;height:1px;background:#c4c4c4;"></div><div style="position:absolute;left:962px;top:171px;width:4px;height:1px;background:#c4c4c4;"></div><div style="position:absolute;left:935px;top:187px;width:4px;height:1px;background:#c4c4c4;"></div><div style="position:absolute;left:962px;top:187px;width:4px;height:1px;background:#c4c4c4;"></div><div style="position:absolute;left:935px;top:203px;width:4px;height:1px;background:#c4c4c4;"></div><div style="position:absolute;left:962px;top:203px;width:4px;height:1px;background:#c4c4c4;"></div><div style="position:absolute;left:935px;top:219px;width:4px;height:1px;background:#c4c4c4;"></div><div style="position:absolute;left:962px;top:219px;width:4px;height:1px;background:#c4c4c4;"></div><div style="position:absolute;left:935px;top:235px;width:4px;height:1px;background:#c4c4c4;"></div><div style="position:absolute;left:962px;top:235px;width:4px;height:1px;background:#c4c4c4;"></div><div style="position:absolute;left:935px;top:251px;width:4px;height:1px;background:#c4c4c4;"></div><div style="position:absolute;left:962px;top:251px;width:4px;height:1px;background:#c4c4c4;"></div><div style="position:absolute;left:935px;top:267px;width:4px;height:1px;background:#c4c4c4;"></div><div style="position:absolute;left:962px;top:267px;width:4px;height:1px;background:#c4c4c4;"></div><div style="position:absolute;left:935px;top:282px;width:4px;height:1px;background:#c4c4c4;"></div><div style="position:absolute;left:962px;top:282px;width:4px;height:1px;background:#c4c4c4;"></div><div style="position:absolute;left:940px;top:204px;width:21px;height:10px;border:1px solid #5a5a5a;border-radius:2px;background:linear-gradient(180deg,#fdfdfd 0,#f0f0f0 40%,#d8d8d8 100%);box-shadow:inset 0 0 0 1px #fff;"></div><div class="t" style="left:921px;width:64px;text-align:center;top:302.4px;font-size:12px;color:#000;transform:scaleX(0.91);transform-origin:50% 50%;">Contrast</div><div style="position:absolute;left:949px;top:327px;width:3px;height:168px;border-left:1px solid #a0a0a0;border-right:1px solid #fff;background:#e6e6e6;"></div><div style="position:absolute;left:935px;top:332px;width:4px;height:1px;background:#c4c4c4;"></div><div style="position:absolute;left:962px;top:332px;width:4px;height:1px;background:#c4c4c4;"></div><div style="position:absolute;left:935px;top:352px;width:4px;height:1px;background:#c4c4c4;"></div><div style="position:absolute;left:962px;top:352px;width:4px;height:1px;background:#c4c4c4;"></div><div style="position:absolute;left:935px;top:372px;width:4px;height:1px;background:#c4c4c4;"></div><div style="position:absolute;left:962px;top:372px;width:4px;height:1px;background:#c4c4c4;"></div><div style="position:absolute;left:935px;top:392px;width:4px;height:1px;background:#c4c4c4;"></div><div style="position:absolute;left:962px;top:392px;width:4px;height:1px;background:#c4c4c4;"></div><div style="position:absolute;left:935px;top:412px;width:4px;height:1px;background:#c4c4c4;"></div><div style="position:absolute;left:962px;top:412px;width:4px;height:1px;background:#c4c4c4;"></div><div style="position:absolute;left:935px;top:432px;width:4px;height:1px;background:#c4c4c4;"></div><div style="position:absolute;left:962px;top:432px;width:4px;height:1px;background:#c4c4c4;"></div><div style="position:absolute;left:935px;top:451px;width:4px;height:1px;background:#c4c4c4;"></div><div style="position:absolute;left:962px;top:451px;width:4px;height:1px;background:#c4c4c4;"></div><div style="position:absolute;left:935px;top:471px;width:4px;height:1px;background:#c4c4c4;"></div><div style="position:absolute;left:962px;top:471px;width:4px;height:1px;background:#c4c4c4;"></div><div style="position:absolute;left:935px;top:491px;width:4px;height:1px;background:#c4c4c4;"></div><div style="position:absolute;left:962px;top:491px;width:4px;height:1px;background:#c4c4c4;"></div><div style="position:absolute;left:940px;top:484px;width:21px;height:10px;border:1px solid #5a5a5a;border-radius:2px;background:linear-gradient(180deg,#fdfdfd 0,#f0f0f0 40%,#d8d8d8 100%);box-shadow:inset 0 0 0 1px #fff;"></div><div class="t" style="left:921px;width:64px;text-align:center;top:511.1px;font-size:12px;color:#000;transform:scaleX(0.91);transform-origin:50% 50%;">Range</div><div style="position:absolute;left:949px;top:536px;width:3px;height:169px;border-left:1px solid #a0a0a0;border-right:1px solid #fff;background:#e6e6e6;"></div><div style="position:absolute;left:935px;top:541px;width:4px;height:1px;background:#c4c4c4;"></div><div style="position:absolute;left:962px;top:541px;width:4px;height:1px;background:#c4c4c4;"></div><div style="position:absolute;left:935px;top:552px;width:4px;height:1px;background:#c4c4c4;"></div><div style="position:absolute;left:962px;top:552px;width:4px;height:1px;background:#c4c4c4;"></div><div style="position:absolute;left:935px;top:564px;width:4px;height:1px;background:#c4c4c4;"></div><div style="position:absolute;left:962px;top:564px;width:4px;height:1px;background:#c4c4c4;"></div><div style="position:absolute;left:935px;top:575px;width:4px;height:1px;background:#c4c4c4;"></div><div style="position:absolute;left:962px;top:575px;width:4px;height:1px;background:#c4c4c4;"></div><div style="position:absolute;left:935px;top:587px;width:4px;height:1px;background:#c4c4c4;"></div><div style="position:absolute;left:962px;top:587px;width:4px;height:1px;background:#c4c4c4;"></div><div style="position:absolute;left:935px;top:598px;width:4px;height:1px;background:#c4c4c4;"></div><div style="position:absolute;left:962px;top:598px;width:4px;height:1px;background:#c4c4c4;"></div><div style="position:absolute;left:935px;top:609px;width:4px;height:1px;background:#c4c4c4;"></div><div style="position:absolute;left:962px;top:609px;width:4px;height:1px;background:#c4c4c4;"></div><div style="position:absolute;left:935px;top:621px;width:4px;height:1px;background:#c4c4c4;"></div><div style="position:absolute;left:962px;top:621px;width:4px;height:1px;background:#c4c4c4;"></div><div style="position:absolute;left:935px;top:632px;width:4px;height:1px;background:#c4c4c4;"></div><div style="position:absolute;left:962px;top:632px;width:4px;height:1px;background:#c4c4c4;"></div><div style="position:absolute;left:935px;top:644px;width:4px;height:1px;background:#c4c4c4;"></div><div style="position:absolute;left:962px;top:644px;width:4px;height:1px;background:#c4c4c4;"></div><div style="position:absolute;left:935px;top:655px;width:4px;height:1px;background:#c4c4c4;"></div><div style="position:absolute;left:962px;top:655px;width:4px;height:1px;background:#c4c4c4;"></div><div style="position:absolute;left:935px;top:666px;width:4px;height:1px;background:#c4c4c4;"></div><div style="position:absolute;left:962px;top:666px;width:4px;height:1px;background:#c4c4c4;"></div><div style="position:absolute;left:935px;top:678px;width:4px;height:1px;background:#c4c4c4;"></div><div style="position:absolute;left:962px;top:678px;width:4px;height:1px;background:#c4c4c4;"></div><div style="position:absolute;left:935px;top:689px;width:4px;height:1px;background:#c4c4c4;"></div><div style="position:absolute;left:962px;top:689px;width:4px;height:1px;background:#c4c4c4;"></div><div style="position:absolute;left:935px;top:701px;width:4px;height:1px;background:#c4c4c4;"></div><div style="position:absolute;left:962px;top:701px;width:4px;height:1px;background:#c4c4c4;"></div><div style="position:absolute;left:940px;top:672px;width:21px;height:10px;border:1px solid #5a5a5a;border-radius:2px;background:linear-gradient(180deg,#fdfdfd 0,#f0f0f0 40%,#d8d8d8 100%);box-shadow:inset 0 0 0 1px #fff;"></div><div class="t" style="left:921px;width:64px;text-align:center;top:720.6px;font-size:12px;color:#000;transform:scaleX(0.91);transform-origin:50% 50%;">Offset</div><div style="position:absolute;left:949px;top:748px;width:3px;height:169px;border-left:1px solid #a0a0a0;border-right:1px solid #fff;background:#e6e6e6;"></div><div style="position:absolute;left:935px;top:753px;width:4px;height:1px;background:#c4c4c4;"></div><div style="position:absolute;left:962px;top:753px;width:4px;height:1px;background:#c4c4c4;"></div><div style="position:absolute;left:935px;top:764px;width:4px;height:1px;background:#c4c4c4;"></div><div style="position:absolute;left:962px;top:764px;width:4px;height:1px;background:#c4c4c4;"></div><div style="position:absolute;left:935px;top:774px;width:4px;height:1px;background:#c4c4c4;"></div><div style="position:absolute;left:962px;top:774px;width:4px;height:1px;background:#c4c4c4;"></div><div style="position:absolute;left:935px;top:785px;width:4px;height:1px;background:#c4c4c4;"></div><div style="position:absolute;left:962px;top:785px;width:4px;height:1px;background:#c4c4c4;"></div><div style="position:absolute;left:935px;top:796px;width:4px;height:1px;background:#c4c4c4;"></div><div style="position:absolute;left:962px;top:796px;width:4px;height:1px;background:#c4c4c4;"></div><div style="position:absolute;left:935px;top:806px;width:4px;height:1px;background:#c4c4c4;"></div><div style="position:absolute;left:962px;top:806px;width:4px;height:1px;background:#c4c4c4;"></div><div style="position:absolute;left:935px;top:817px;width:4px;height:1px;background:#c4c4c4;"></div><div style="position:absolute;left:962px;top:817px;width:4px;height:1px;background:#c4c4c4;"></div><div style="position:absolute;left:935px;top:827px;width:4px;height:1px;background:#c4c4c4;"></div><div style="position:absolute;left:962px;top:827px;width:4px;height:1px;background:#c4c4c4;"></div><div style="position:absolute;left:935px;top:838px;width:4px;height:1px;background:#c4c4c4;"></div><div style="position:absolute;left:962px;top:838px;width:4px;height:1px;background:#c4c4c4;"></div><div style="position:absolute;left:935px;top:849px;width:4px;height:1px;background:#c4c4c4;"></div><div style="position:absolute;left:962px;top:849px;width:4px;height:1px;background:#c4c4c4;"></div><div style="position:absolute;left:935px;top:859px;width:4px;height:1px;background:#c4c4c4;"></div><div style="position:absolute;left:962px;top:859px;width:4px;height:1px;background:#c4c4c4;"></div><div style="position:absolute;left:935px;top:870px;width:4px;height:1px;background:#c4c4c4;"></div><div style="position:absolute;left:962px;top:870px;width:4px;height:1px;background:#c4c4c4;"></div><div style="position:absolute;left:935px;top:880px;width:4px;height:1px;background:#c4c4c4;"></div><div style="position:absolute;left:962px;top:880px;width:4px;height:1px;background:#c4c4c4;"></div><div style="position:absolute;left:935px;top:891px;width:4px;height:1px;background:#c4c4c4;"></div><div style="position:absolute;left:962px;top:891px;width:4px;height:1px;background:#c4c4c4;"></div><div style="position:absolute;left:935px;top:902px;width:4px;height:1px;background:#c4c4c4;"></div><div style="position:absolute;left:962px;top:902px;width:4px;height:1px;background:#c4c4c4;"></div><div style="position:absolute;left:935px;top:912px;width:4px;height:1px;background:#c4c4c4;"></div><div style="position:absolute;left:962px;top:912px;width:4px;height:1px;background:#c4c4c4;"></div><div style="position:absolute;left:940px;top:896px;width:21px;height:10px;border:1px solid #5a5a5a;border-radius:2px;background:linear-gradient(180deg,#fdfdfd 0,#f0f0f0 40%,#d8d8d8 100%);box-shadow:inset 0 0 0 1px #fff;"></div><div style="position:absolute;left:986px;top:930px;width:2px;height:2px;background:#c0c0c0;box-shadow:1px 1px 0 #fff;"></div><div style="position:absolute;left:986px;top:933px;width:2px;height:2px;background:#c0c0c0;box-shadow:1px 1px 0 #fff;"></div><div style="position:absolute;left:983px;top:933px;width:2px;height:2px;background:#c0c0c0;box-shadow:1px 1px 0 #fff;"></div><div style="position:absolute;left:986px;top:936px;width:2px;height:2px;background:#c0c0c0;box-shadow:1px 1px 0 #fff;"></div><div style="position:absolute;left:983px;top:936px;width:2px;height:2px;background:#c0c0c0;box-shadow:1px 1px 0 #fff;"></div><div style="position:absolute;left:980px;top:936px;width:2px;height:2px;background:#c0c0c0;box-shadow:1px 1px 0 #fff;"></div></body></html>
